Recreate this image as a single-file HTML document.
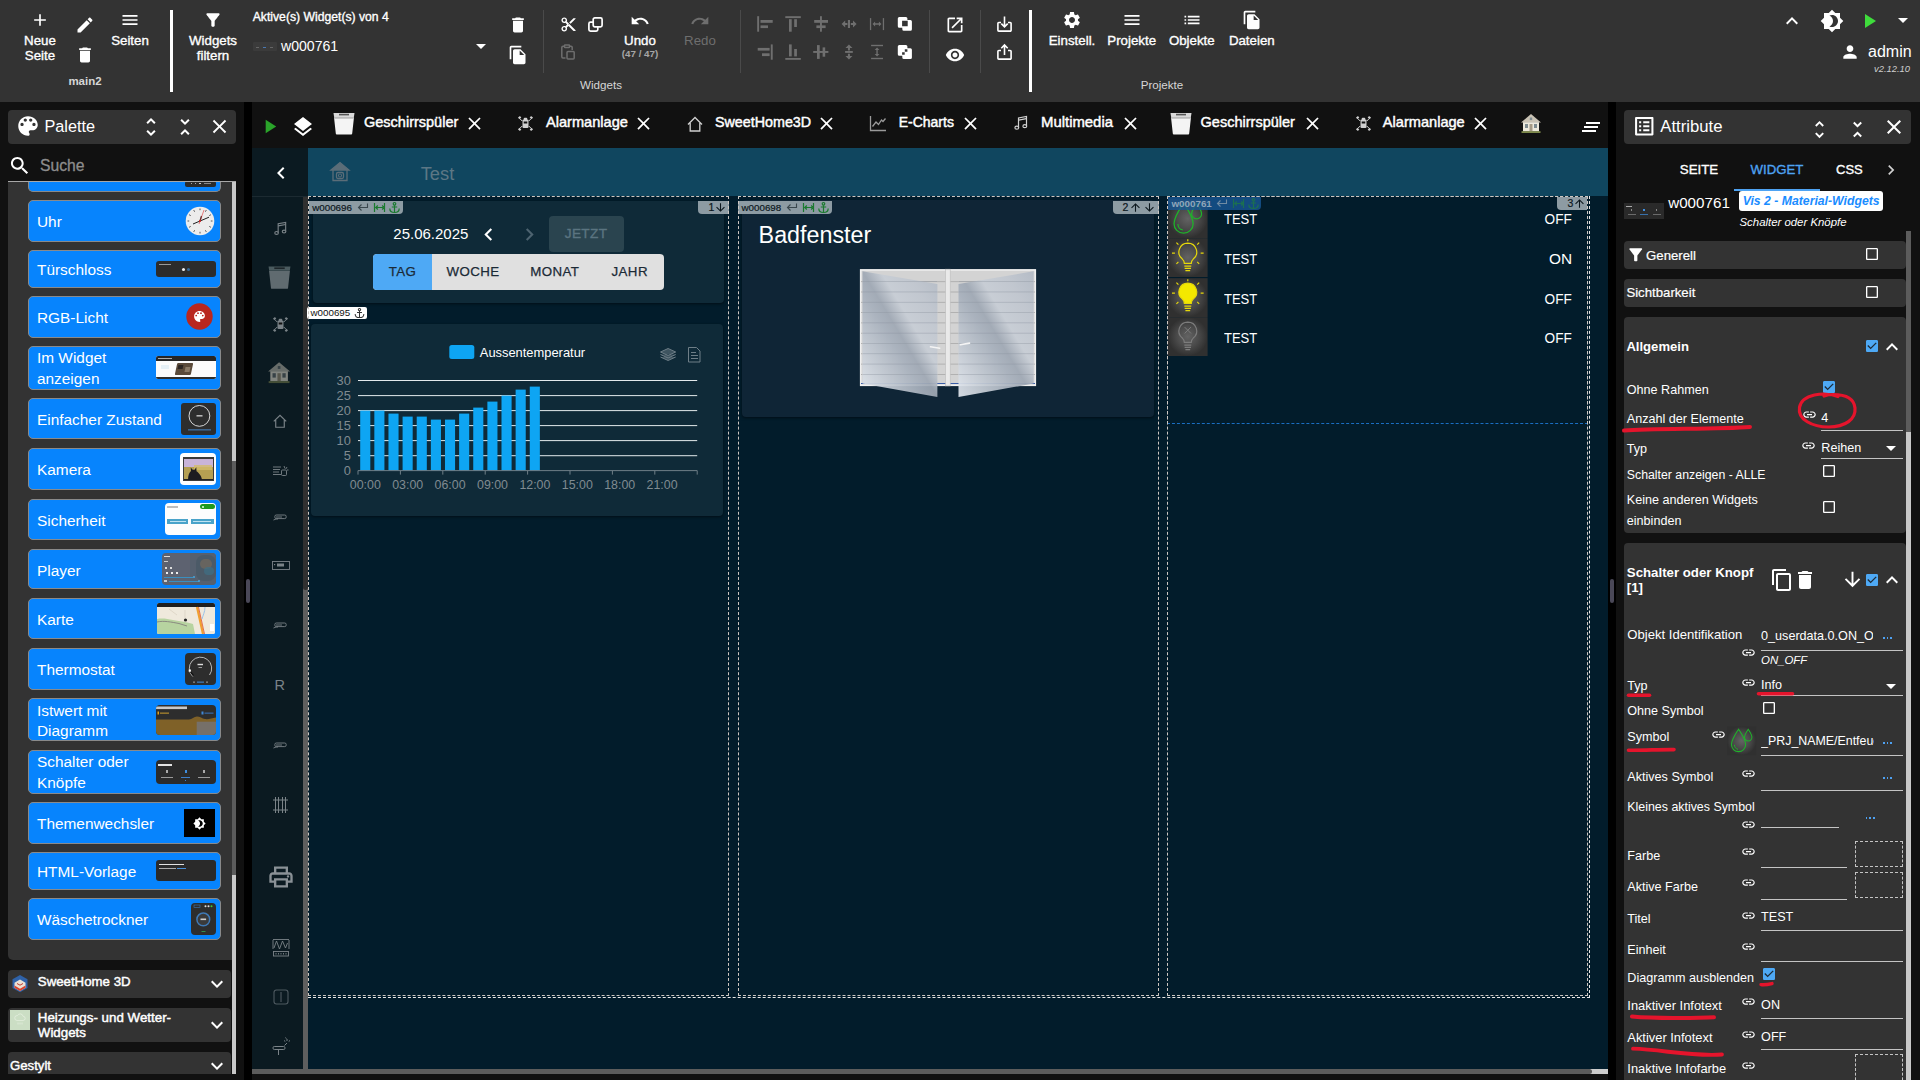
<!DOCTYPE html>
<html lang="de">
<head>
<meta charset="utf-8">
<title>ioBroker vis-2 Editor</title>
<style>
*{box-sizing:border-box;margin:0;padding:0}
html,body{width:1920px;height:1080px;overflow:hidden;background:#111111;color:#fff;font-family:"Liberation Sans",sans-serif;}
.a{position:absolute}
.t{position:absolute;white-space:nowrap;line-height:1}
.m{-webkit-text-stroke:.35px currentColor}
svg{position:absolute;display:block;overflow:visible}
.ic{fill:#fff}
.dis{fill:#6e6e6e}
/* top toolbar */
#top{left:0;top:0;width:1920px;height:102px;background:#333333}
.vsep{position:absolute;width:1px;background:#4a4a4a}
.vbig{position:absolute;width:3px;background:#fff}
/* panels */
.hdr{position:absolute;background:#333333;border-radius:4px}
.pi{position:absolute;left:28px;width:193px;background:#0784fd;border:1px solid #8a8a8a;border-radius:5px;color:#fff;font-size:15.4px}
.pi .t{left:8px}
.th{position:absolute;border-radius:3px;overflow:hidden}
.acc{position:absolute;left:8px;width:223px;background:#333333;border-radius:4px}
/* attribute panel */
.sec{position:absolute;left:1624px;width:282px;background:#333333;border-radius:4px}
.lbl{position:absolute;left:1627px;font-size:12.6px;white-space:nowrap;line-height:1;color:#fff}
.val{position:absolute;font-size:12.6px;white-space:nowrap;line-height:1;color:#fff}
.ul{position:absolute;height:1px;background:#c9c9c9}
.dash{position:absolute;border:1px dashed #bdbdbd}
.red{position:absolute;background:#e5142c;border-radius:3px}
</style>
</head>
<body>
<svg width="0" height="0" style="left:-10px;top:-10px">
<defs>
<path id="i-add" d="M19 13h-6v6h-2v-6H5v-2h6V5h2v6h6v2z"/>
<path id="i-edit" d="M3 17.25V21h3.75L17.81 9.94l-3.75-3.75L3 17.25zM20.71 7.04c.39-.39.39-1.02 0-1.41l-2.34-2.34c-.39-.39-1.02-.39-1.41 0l-1.83 1.83 3.75 3.75 1.83-1.83z"/>
<path id="i-del" d="M6 19c0 1.1.9 2 2 2h8c1.1 0 2-.9 2-2V7H6v12zM19 4h-3.5l-1-1h-5l-1 1H5v2h14V4z"/>
<path id="i-menu" d="M3 18h18v-2H3v2zm0-5h18v-2H3v2zm0-7v2h18V6H3z"/>
<path id="i-filter" d="M4.25 5.61C6.27 8.2 10 13 10 13v6c0 .55.45 1 1 1h2c.55 0 1-.45 1-1v-6s3.72-4.8 5.74-7.39c.51-.66.04-1.61-.79-1.61H5.04c-.83 0-1.3.95-.79 1.61z"/>
<path id="i-dd" d="M7 10l5 5 5-5z"/>
<path id="i-fcopy" d="M16 1H4c-1.1 0-2 .9-2 2v14h2V3h12V1zm-1 4l6 6v10c0 1.1-.9 2-2 2H7.990C6.890 23 6 22.100 6 21l.010-14c0-1.100.890-2 1.990-2h7zm-1 7h5.500L14 6.500V12z"/>
<path id="i-ccopy" d="M16 1H4c-1.1 0-2 .9-2 2v14h2V3h12V1zm3 4H8c-1.1 0-2 .9-2 2v14c0 1.1.9 2 2 2h11c1.1 0 2-.9 2-2V7c0-1.1-.9-2-2-2zm0 16H8V7h11v14z"/>
<path id="i-cut" d="M9.64 7.64c.23-.5.36-1.05.36-1.64 0-2.21-1.79-4-4-4S2 3.790 2 6s1.790 4 4 4c.590 0 1.140-.130 1.640-.360L10 12l-2.360 2.360C7.140 14.130 6.590 14 6 14c-2.210 0-4 1.790-4 4s1.790 4 4 4 4-1.790 4-4c0-.590-.130-1.140-.360-1.640L12 14l7 7h3v-1L9.640 7.640zM6 8c-1.100 0-2-.890-2-2s.900-2 2-2 2 .890 2 2-.900 2-2 2zm0 12c-1.100 0-2-.890-2-2s.900-2 2-2 2 .890 2 2-.900 2-2 2zm6-7.500c-.280 0-.500-.220-.500-.500s.220-.500.500-.500.500.220.500.500-.220.500-.500.500zM19 3l-6 6 2 2 7-7V3z"/>
<path id="i-undo" d="M12.5 8c-2.65 0-5.05.99-6.9 2.6L2 7v9h9l-3.62-3.62c1.39-1.16 3.16-1.88 5.12-1.88 3.54 0 6.55 2.31 7.6 5.5l2.37-.78C21.08 11.03 17.15 8 12.5 8z"/>
<path id="i-redo" d="M18.4 10.6C16.55 8.99 14.15 8 11.5 8c-4.65 0-8.58 3.03-9.96 7.22L3.9 16c1.05-3.19 4.05-5.5 7.6-5.5 1.95 0 3.73.72 5.12 1.88L13 16h9V7l-3.6 3.6z"/>
<path id="i-open" d="M19 19H5V5h7V3H5c-1.11 0-2 .9-2 2v14c0 1.1.89 2 2 2h14c1.1 0 2-.9 2-2v-7h-2v7zM14 3v2h3.59l-9.83 9.83 1.41 1.41L19 6.41V10h2V3h-7z"/>
<path id="i-eye" d="M12 4.5C7 4.5 2.73 7.61 1 12c1.73 4.39 6 7.5 11 7.5s9.27-3.11 11-7.5c-1.73-4.39-6-7.5-11-7.5zM12 17c-2.76 0-5-2.24-5-5s2.24-5 5-5 5 2.24 5 5-2.24 5-5 5zm0-8c-1.66 0-3 1.34-3 3s1.34 3 3 3 3-1.34 3-3-1.34-3-3-3z"/>
<path id="i-gear" d="M19.14 12.94c.04-.3.06-.61.06-.94 0-.32-.02-.64-.07-.94l2.03-1.58c.18-.14.23-.41.12-.61l-1.92-3.32c-.12-.22-.37-.29-.59-.22l-2.39.96c-.5-.38-1.03-.7-1.62-.94l-.36-2.54c-.04-.24-.24-.41-.48-.41h-3.84c-.24 0-.43.17-.47.41l-.36 2.54c-.59.24-1.13.57-1.62.94l-2.39-.96c-.22-.08-.47 0-.59.22L2.74 8.87c-.12.21-.08.47.12.61l2.03 1.58c-.05.3-.09.63-.09.94s.02.64.07.94l-2.03 1.58c-.18.14-.23.41-.12.61l1.92 3.32c.12.22.37.29.59.22l2.39-.96c.5.38 1.03.7 1.62.94l.36 2.54c.05.24.24.41.48.41h3.84c.24 0 .44-.17.47-.41l.36-2.54c.59-.24 1.13-.56 1.62-.94l2.39.96c.22.08.47 0 .59-.22l1.92-3.32c.12-.22.07-.47-.12-.61l-2.01-1.58zM12 15.6c-1.98 0-3.6-1.62-3.6-3.6s1.62-3.6 3.6-3.6 3.6 1.62 3.6 3.6-1.62 3.6-3.6 3.6z"/>
<path id="i-list" d="M3 13h2v-2H3v2zm0 4h2v-2H3v2zm0-8h2V7H3v2zm4 4h14v-2H7v2zm0 4h14v-2H7v2zM7 7v2h14V7H7z"/>
<path id="i-person" d="M12 12c2.21 0 4-1.79 4-4s-1.79-4-4-4-4 1.79-4 4 1.79 4 4 4zm0 2c-2.67 0-8 1.34-8 4v2h16v-2c0-2.66-5.33-4-8-4z"/>
<path id="i-play" d="M8 5v14l11-7z"/>
<path id="i-less" d="M12 8l-6 6 1.41 1.41L12 10.83l4.59 4.58L18 14z"/>
<path id="i-more" d="M16.59 8.59L12 13.17 7.41 8.59 6 10l6 6 6-6z"/>
<path id="i-close" d="M19 6.41L17.59 5 12 10.59 6.41 5 5 6.41 10.59 12 5 17.59 6.41 19 12 13.41 17.59 19 19 17.59 13.41 12z"/>
<path id="i-bright" d="M20 8.69V4h-4.69L12 .69 8.69 4H4v4.69L.69 12 4 15.31V20h4.69L12 23.31 15.31 20H20v-4.69L23.31 12 20 8.69zM12 18c-.89 0-1.74-.2-2.5-.55C11.56 16.5 13 14.42 13 12s-1.44-4.5-3.5-5.45C10.26 6.2 11.11 6 12 6c3.31 0 6 2.69 6 6s-2.69 6-6 6z"/>
<path id="i-palette" d="M12 3c-4.97 0-9 4.03-9 9s4.03 9 9 9c.83 0 1.5-.67 1.5-1.5 0-.39-.15-.74-.39-1.01-.23-.26-.38-.61-.38-.99 0-.83.67-1.5 1.5-1.5H16c2.76 0 5-2.24 5-5 0-4.42-4.03-8-9-8zm-5.5 9c-.83 0-1.5-.67-1.5-1.5S5.67 9 6.5 9 8 9.67 8 10.5 7.33 12 6.5 12zm3-4C8.67 8 8 7.33 8 6.5S8.67 5 9.5 5s1.500.67 1.500 1.500S10.330 8 9.500 8zm5 0c-.83 0-1.500-.67-1.500-1.500S13.670 5 14.500 5s1.500.67 1.500 1.500S15.330 8 14.500 8zm3 4c-.83 0-1.500-.67-1.500-1.500S16.670 9 17.500 9s1.500.67 1.500 1.500-.67 1.500-1.500 1.500z"/>
<path id="i-unmore" d="M12 5.83L15.17 9l1.41-1.41L12 3 7.41 7.59 8.83 9 12 5.83zm0 12.34L8.83 15l-1.41 1.41L12 21l4.59-4.59L15.17 15 12 18.17z"/>
<path id="i-unless" d="M7.41 18.59L8.83 20 12 16.83 15.17 20l1.41-1.41L12 14l-4.59 4.59zm9.18-13.18L15.17 4 12 7.17 8.83 4 7.41 5.41 12 10l4.590-4.590z"/>
<path id="i-search" d="M15.5 14h-.79l-.28-.27C15.41 12.59 16 11.11 16 9.5 16 5.91 13.09 3 9.5 3S3 5.91 3 9.5 5.91 16 9.5 16c1.61 0 3.09-.59 4.23-1.57l.27.28v.79l5 4.99L20.49 19l-4.99-5zm-6 0C7.01 14 5 11.99 5 9.5S7.01 5 9.5 5 14 7.01 14 9.5 11.99 14 9.5 14z"/>
<path id="i-layers" d="M11.99 18.54l-7.37-5.73L3 14.07l9 7 9-7-1.63-1.27-7.38 5.74zM12 16l7.36-5.73L21 9l-9-7-9 7 1.63 1.27L12 16z"/>
<path id="i-listalt" d="M19 5v14H5V5h14m1.1-2H3.9c-.5 0-.9.4-.9.9v16.2c0 .4.4.9.9.9h16.2c.4 0 .9-.5.9-.9V3.9c0-.5-.5-.9-.9-.9zM11 7h6v2h-6V7zm0 4h6v2h-6v-2zm0 4h6v2h-6zM7 7h2v2H7zm0 4h2v2H7zm0 4h2v2H7z"/>
<path id="i-link" d="M3.9 12c0-1.71 1.39-3.1 3.1-3.1h4V7H7c-2.76 0-5 2.24-5 5s2.24 5 5 5h4v-1.900H7c-1.710 0-3.100-1.390-3.100-3.100zM8 13h8v-2H8v2zm9-6h-4v1.900h4c1.710 0 3.100 1.390 3.100 3.100s-1.390 3.100-3.100 3.100h-4V17h4c2.760 0 5-2.240 5-5s-2.240-5-5-5z"/>
<path id="i-cl" d="M15.41 7.41L14 6l-6 6 6 6 1.41-1.41L10.83 12z"/>
<path id="i-cr" d="M10 6L8.59 7.41 13.17 12l-4.58 4.59L10 18l6-6z"/>
<path id="i-down" d="M20 12l-1.41-1.41L13 16.17V4h-2v12.17l-5.58-5.59L4 12l8 8 8-8z"/>
<path id="i-up" d="M4 12l1.41 1.41L11 7.83V20h2V7.83l5.580 5.590L20 12l-8-8-8 8z"/>
<path id="i-cbo" d="M19 5v14H5V5h14m0-2H5c-1.1 0-2 .9-2 2v14c0 1.1.9 2 2 2h14c1.1 0 2-.9 2-2V5c0-1.1-.9-2-2-2z"/>
<path id="i-cb" d="M19 3H5c-1.11 0-2 .9-2 2v14c0 1.1.89 2 2 2h14c1.11 0 2-.9 2-2V5c0-1.1-.89-2-2-2zm-9 14l-5-5 1.41-1.41L10 14.170l7.590-7.590L19 8l-9 9z"/>
<path id="i-print" d="M19 8H5c-1.66 0-3 1.34-3 3v6h4v4h12v-4h4v-6c0-1.66-1.34-3-3-3zm-3 11H8v-5h8v5zm3-7c-.55 0-1-.45-1-1s.45-1 1-1 1 .45 1 1-.45 1-1 1zm-1-9H6v4h12V3z"/>
<path id="i-clearall" d="M5 13h14v-2H5v2zm-2 4h14v-2H3v2zM7 7v2h14V7H7z"/>
</defs>
</svg>

<!-- ================= TOP TOOLBAR ================= -->
<div id="top" class="a">
<!-- group: pages -->
<svg class="ic" style="left:30px;top:10px" width="20" height="20" viewBox="0 0 24 24"><use href="#i-add"/></svg>
<div class="t m" style="left:40px;top:34.4px;font-size:13.3px;transform:translateX(-50%)">Neue</div>
<div class="t m" style="left:40px;top:49.4px;font-size:13.3px;transform:translateX(-50%)">Seite</div>
<svg class="ic" style="left:74.7px;top:15px" width="20" height="20" viewBox="0 0 24 24"><use href="#i-edit"/></svg>
<svg class="ic" style="left:74.7px;top:45px" width="20" height="20" viewBox="0 0 24 24"><use href="#i-del"/></svg>
<svg class="ic" style="left:120px;top:10px" width="20" height="20" viewBox="0 0 24 24"><use href="#i-menu"/></svg>
<div class="t m" style="left:130px;top:34.4px;font-size:13.3px;transform:translateX(-50%)">Seiten</div>
<div class="t" style="left:85px;top:76.3px;font-size:11.5px;font-weight:700;color:#d6d6d6;transform:translateX(-50%)">main2</div>
<div class="vbig" style="left:170px;top:10px;height:82px"></div>
<!-- group: widgets -->
<svg class="ic" style="left:202.7px;top:10px" width="20" height="20" viewBox="0 0 24 24"><use href="#i-filter"/></svg>
<div class="t m" style="left:213px;top:34.4px;font-size:13.3px;transform:translateX(-50%)">Widgets</div>
<div class="t m" style="left:213px;top:49.4px;font-size:13.3px;transform:translateX(-50%)">filtern</div>
<div class="t m" style="left:252.7px;top:11.3px;font-size:12.2px">Aktive(s) Widget(s) von 4</div>
<div class="a" style="left:252.7px;top:41.5px;width:24px;height:9.5px;background:#3b3b3b;border-radius:1px"></div>
<div class="a" style="left:256px;top:47px;width:3px;height:1px;background:#666"></div>
<div class="a" style="left:263px;top:47px;width:3px;height:1px;background:#4a78b0"></div>
<div class="a" style="left:270px;top:47px;width:3px;height:1px;background:#666"></div>
<div class="t" style="left:281px;top:39.4px;font-size:14.1px">w000761</div>
<svg class="ic" style="left:468.7px;top:34px" width="24" height="24" viewBox="0 0 24 24"><use href="#i-dd"/></svg>
<svg class="ic" style="left:508.300px;top:15px" width="20" height="20" viewBox="0 0 24 24"><use href="#i-del"/></svg>
<svg class="ic" style="left:507.8px;top:45px" width="20" height="20" viewBox="0 0 24 24"><use href="#i-fcopy"/></svg>
<div class="vsep" style="left:542.800px;top:10px;height:63px"></div>
<!-- cut / copy / paste -->
<svg class="ic" style="left:559.5px;top:15.5px" width="17" height="17" viewBox="0 0 24 24"><use href="#i-cut"/></svg>
<svg style="left:588px;top:16.5px;fill:none;stroke:#fff;stroke-width:1.7" width="15" height="15" viewBox="0 0 15 15"><rect x="5.2" y="0.9" width="8.9" height="8.9" rx="1.6"/><path d="M5.2 5.2H2.5a1.6 1.6 0 0 0-1.6 1.6v5.700a1.600 1.600 0 0 0 1.600 1.600h5.700a1.600 1.600 0 0 0 1.600-1.600V9.800"/></svg>
<svg style="left:559px;top:44.200px;fill:none;stroke:#6e6e6e;stroke-width:1.500" width="16" height="16" viewBox="0 0 16 16"><path d="M10.500 2.200H12a1.200 1.200 0 0 1 1.200 1.200V6M5.500 2.200H4a1.200 1.200 0 0 0-1.200 1.200v9.400A1.200 1.200 0 0 0 4 14h2.500"/><rect x="5.500" y="0.900" width="5" height="2.600" rx=".6"/><rect x="8" y="7.500" width="7.200" height="7.600" rx="1"/></svg>
<!-- undo / redo -->
<svg class="ic" style="left:630px;top:10.5px" width="20" height="20" viewBox="0 0 24 24"><use href="#i-undo"/></svg>
<div class="t m" style="left:640px;top:34.4px;font-size:13.3px;transform:translateX(-50%)">Undo</div>
<div class="t" style="left:640px;top:49.200px;font-size:9.800px;font-weight:700;color:#a6a6a6;transform:translateX(-50%)">(47 / 47)</div>
<svg class="dis" style="left:690px;top:10.5px" width="20" height="20" viewBox="0 0 24 24"><use href="#i-redo"/></svg>
<div class="t" style="left:700px;top:34.4px;font-size:13.3px;color:#6e6e6e;transform:translateX(-50%)">Redo</div>
<div class="vsep" style="left:740px;top:10px;height:63px"></div>
<svg style="left:745px;top:5px" width="180" height="65" viewBox="745 5 180 65">
<g fill="#6f6f6f">
<!-- r1: align left -->
<rect x="757.2" y="16.2" width="1.9" height="15.5"/><rect x="760.5" y="20" width="12.2" height="2.8"/><rect x="760.5" y="25.4" width="7.5" height="2.700"/>
<!-- r1: align top -->
<rect x="785.3" y="16.2" width="15.5" height="1.9"/><rect x="789" y="19.2" width="2.700" height="12.500"/><rect x="794.2" y="19.200" width="2.700" height="7.800"/>
<!-- r1: center h -->
<rect x="820" y="16.200" width="1.900" height="15.500"/><rect x="814.200" y="20" width="13.800" height="2.800"/><rect x="816.400" y="25.400" width="9.200" height="2.700"/>
<!-- r1: dist h -->
<rect x="847.900" y="20" width="2.100" height="8"/><path d="M841.600 24l3.600-3.600v2.500h2.200v2.200h-2.200v2.500zM856.600 24l-3.600-3.600v2.500h-2.200v2.200h2.200v2.500z"/>
<!-- r1: width -->
<rect x="869.900" y="18.100" width="1.300" height="12"/><rect x="882.800" y="18.100" width="1.300" height="12"/><path d="M872.500 24l2.600-2.400v1.700h3.800v-1.700l2.600 2.400-2.600 2.400v-1.700h-3.800v1.700z"/>
<!-- r2: align right -->
<rect x="770.800" y="44.400" width="1.900" height="15.300"/><rect x="757.700" y="47.900" width="11.900" height="2.700"/><rect x="762" y="53.300" width="7.600" height="2.800"/>
<!-- r2: align bottom -->
<rect x="785.300" y="58" width="15.500" height="1.800"/><rect x="789" y="44.400" width="2.700" height="12"/><rect x="794.200" y="49" width="2.700" height="7.400"/>
<!-- r2: center v -->
<rect x="813.200" y="51" width="15.200" height="1.900"/><rect x="817" y="45.100" width="2.700" height="13.800"/><rect x="822.600" y="47.400" width="2.600" height="9.300"/>
<!-- r2: dist v -->
<rect x="845.100" y="51" width="7.700" height="1.900"/><path d="M848.950 44.600l3.500 3.500h-2.500v2.300h-2v-2.300h-2.500zM848.950 59.500l3.500-3.500h-2.500v-2.300h-2v2.300h-2.500z"/>
<!-- r2: height -->
<rect x="871.100" y="44.800" width="11.900" height="1.400"/><rect x="871.100" y="57.800" width="11.900" height="1.400"/><path d="M877.050 47.400l2.400 2.600h-1.700v4h1.700l-2.400 2.600-2.400-2.600h1.700v-4h-1.700z"/>
</g>
<!-- bring to front / send to back -->
<g fill="#fff">
<path fill-rule="evenodd" d="M899.300 17h6.600a1.500 1.500 0 0 1 1.500 1.500v1.500h3a1.500 1.500 0 0 1 1.500 1.500v7.800a1.500 1.500 0 0 1-1.500 1.500h-6.600a1.500 1.500 0 0 1-1.500-1.500v-1.600h-3a1.500 1.500 0 0 1-1.500-1.500v-7.700a1.500 1.500 0 0 1 1.500-1.500zM902.100 20.700h5.600v5.600h-5.600z"/>
<path fill-rule="evenodd" d="M899.300 45h6.600a1.500 1.500 0 0 1 1.500 1.500v1.700h3a1.500 1.500 0 0 1 1.500 1.500v7.800a1.500 1.500 0 0 1-1.500 1.500h-6.600a1.500 1.500 0 0 1-1.500-1.500v-1.800h-3a1.500 1.500 0 0 1-1.500-1.500v-7.700a1.500 1.500 0 0 1 1.500-1.500zM904.800 49.200h2.600v2.600h-2.600zM902.100 52.200h2.600v2.600h-2.600z"/>
</g>
</svg>

<div class="vsep" style="left:929px;top:10px;height:63px"></div>
<svg class="ic" style="left:945px;top:15px" width="20" height="20" viewBox="0 0 24 24"><use href="#i-open"/></svg>
<svg class="ic" style="left:945px;top:45px" width="20" height="20" viewBox="0 0 24 24"><use href="#i-eye"/></svg>
<div class="vsep" style="left:980px;top:10px;height:63px"></div>
<!-- import / export -->
<svg style="left:997px;top:15.500px;fill:none;stroke:#fff;stroke-width:1.600" width="15" height="16" viewBox="0 0 15 16"><path d="M4 6.500H1.800a.9.9 0 0 0-.9.9v6.800a.9.9 0 0 0 .9.9h11.400a.9.9 0 0 0 .9-.9V7.400a.9.9 0 0 0-.9-.9H11M7.500 .500v10M4.300 7.600l3.200 3.200 3.200-3.200"/></svg>
<svg style="left:997px;top:43.500px;fill:none;stroke:#fff;stroke-width:1.600" width="15" height="16" viewBox="0 0 15 16"><path d="M4 6.500H1.800a.9.9 0 0 0-.9.9v6.800a.9.9 0 0 0 .9.9h11.400a.9.9 0 0 0 .9-.9V7.400a.9.9 0 0 0-.9-.9H11M7.500 11V1M4.300 4.200l3.200-3.200 3.200 3.200"/></svg>
<div class="vbig" style="left:1029px;top:10px;height:82px"></div>
<div class="t" style="left:601px;top:78.500px;font-size:11.600px;color:#d6d6d6;transform:translateX(-50%)">Widgets</div>
<!-- group: projects -->
<svg class="ic" style="left:1061.700px;top:10px" width="20" height="20" viewBox="0 0 24 24"><use href="#i-gear"/></svg>
<div class="t m" style="left:1072px;top:34.400px;font-size:13.300px;transform:translateX(-50%)">Einstell.</div>
<svg class="ic" style="left:1121.700px;top:10px" width="20" height="20" viewBox="0 0 24 24"><use href="#i-menu"/></svg>
<div class="t m" style="left:1131.700px;top:34.400px;font-size:13.300px;transform:translateX(-50%)">Projekte</div>
<svg class="ic" style="left:1181.700px;top:10px" width="20" height="20" viewBox="0 0 24 24"><use href="#i-list"/></svg>
<div class="t m" style="left:1191.800px;top:34.400px;font-size:13.300px;transform:translateX(-50%)">Objekte</div>
<svg class="ic" style="left:1241.700px;top:9.500px" width="20" height="20" viewBox="0 0 24 24"><use href="#i-fcopy"/></svg>
<div class="t m" style="left:1251.800px;top:34.400px;font-size:13.300px;transform:translateX(-50%)">Dateien</div>
<div class="t" style="left:1162px;top:78.500px;font-size:11.600px;color:#d6d6d6;transform:translateX(-50%)">Projekte</div>
<!-- right cluster -->
<svg class="ic" style="left:1780.300px;top:8.700px" width="24" height="24" viewBox="0 0 24 24"><use href="#i-less"/></svg>
<svg class="ic" style="left:1819.700px;top:8.700px" width="24" height="24" viewBox="0 0 24 24"><use href="#i-bright"/></svg>
<svg style="left:1856.500px;top:8.700px;fill:#3fdc3c" width="24" height="24" viewBox="0 0 24 24"><use href="#i-play"/></svg>
<svg class="ic" style="left:1891px;top:8.200px" width="24" height="24" viewBox="0 0 24 24"><use href="#i-dd"/></svg>
<svg class="ic" style="left:1839.700px;top:41.700px" width="20" height="20" viewBox="0 0 24 24"><use href="#i-person"/></svg>
<div class="t" style="left:1868px;top:44.400px;font-size:16px">admin</div>
<div class="t" style="left:1874px;top:63.800px;font-size:9.400px;font-style:italic;color:#cfcfcf">v2.12.10</div>
</div>
<!--TOP-END-->

<!-- ================= LEFT PALETTE ================= -->
<!-- header -->
<div class="hdr" style="left:8px;top:110px;width:228px;height:34px"></div>
<svg class="ic" style="left:15px;top:112.800px" width="26" height="26" viewBox="0 0 24 24"><use href="#i-palette"/></svg>
<div class="t" style="left:44.4px;top:118.2px;font-size:16.3px">Palette</div>
<svg class="ic" style="left:139px;top:114.600px" width="24" height="24" viewBox="0 0 24 24"><use href="#i-unmore"/></svg>
<svg class="ic" style="left:173px;top:114.600px" width="24" height="24" viewBox="0 0 24 24"><use href="#i-unless"/></svg>
<svg class="ic" style="left:207.600px;top:115.100px" width="23" height="23" viewBox="0 0 24 24"><use href="#i-close"/></svg>
<svg class="ic" style="left:7.500px;top:154.100px" width="23.500" height="23.500" viewBox="0 0 24 24"><use href="#i-search"/></svg>
<div class="t" style="left:40px;top:157.700px;font-size:15.700px;color:#8d8d8d;-webkit-text-stroke:.3px #8d8d8d">Suche</div>
<div class="a" style="left:8px;top:180.500px;width:223.500px;height:779.500px;background:#333333;border-radius:0 0 0 5px"></div>
<div class="a" style="left:231.500px;top:180.500px;width:4.500px;height:893px;background:#c8c8c8"></div>
<div class="a" style="left:231.500px;top:461px;width:4.500px;height:414px;background:#5c5c5c"></div>
<div class="pi" style="top:180.500px;height:11.300px;border-top:none;border-radius:0 0 5px 5px"></div><div class="th" style="left:185.2px;top:181.0px;width:30.6px;height:5.5px;background:#2b2b2b;border-radius:2px"><div class="a" style="left:6px;top:2px;width:1px;height:1px;background:#aaa;"></div><div class="a" style="left:10px;top:2px;width:1px;height:1px;background:#aaa;"></div><div class="a" style="left:14px;top:2px;width:2px;height:1px;background:#ccc;"></div><div class="a" style="left:19px;top:2px;width:7px;height:1px;background:#888;"></div></div>
<div class="a" style="left:8px;top:180.500px;width:228px;height:1px;background:#a8a8a8"></div>
<div class="pi" style="top:200.0px;height:41.5px"><div class="t" style="top:13.0px">Uhr</div></div><svg style="left:185px;top:205.500px" width="30" height="30" viewBox="-15 -15 30 30"><circle r="14.300" fill="#ececec"/><g stroke="#333" stroke-width=".8"><line x1="0" y1="-12.500" x2="0" y2="-10.800" transform="rotate(0)"/><line x1="0" y1="-12.500" x2="0" y2="-10.800" transform="rotate(30)"/><line x1="0" y1="-12.500" x2="0" y2="-10.800" transform="rotate(60)"/><line x1="0" y1="-12.500" x2="0" y2="-10.800" transform="rotate(90)"/><line x1="0" y1="-12.500" x2="0" y2="-10.800" transform="rotate(120)"/><line x1="0" y1="-12.500" x2="0" y2="-10.800" transform="rotate(150)"/><line x1="0" y1="-12.500" x2="0" y2="-10.800" transform="rotate(180)"/><line x1="0" y1="-12.500" x2="0" y2="-10.800" transform="rotate(210)"/><line x1="0" y1="-12.500" x2="0" y2="-10.800" transform="rotate(240)"/><line x1="0" y1="-12.500" x2="0" y2="-10.800" transform="rotate(270)"/><line x1="0" y1="-12.500" x2="0" y2="-10.800" transform="rotate(300)"/><line x1="0" y1="-12.500" x2="0" y2="-10.800" transform="rotate(330)"/></g><line x1="-7" y1="3" x2="9" y2="-3.800" stroke="#222" stroke-width="1"/><line x1="0" y1="0" x2="1.500" y2="-5" stroke="#222" stroke-width="1.200"/><line x1="-1" y1="3" x2="4" y2="-11" stroke="#e03030" stroke-width=".6"/><circle r="1" fill="#c22"/></svg>

<div class="pi" style="top:250.3px;height:37.3px"><div class="t" style="top:10.7px">Türschloss</div></div><div class="th" style="left:155.9px;top:260.5px;width:60.3px;height:16.7px;background:#2c2c2c;border-radius:3px"><div class="a" style="left:3px;top:3px;width:12px;height:1px;background:#999;"></div><div class="a" style="left:26.5px;top:7.5px;width:2.5px;height:2.5px;background:#eee;border-radius:2px"></div><div class="a" style="left:31.5px;top:7.5px;width:2.5px;height:2.5px;background:#356a9a;border-radius:2px"></div></div>

<div class="pi" style="top:296.0px;height:41.7px"><div class="t" style="top:13.0px">RGB-Licht</div></div><svg style="left:186.200px;top:303px" width="27" height="27" viewBox="0 0 27 27"><circle cx="13.500" cy="13.500" r="13.200" fill="#b9271f"/><g transform="translate(6.300 6.300) scale(.6)" fill="#fff"><use href="#i-palette"/></g></svg>

<div class="pi" style="top:345.9px;height:43.8px"><div class="t" style="top:3.1px">Im Widget</div><div class="t" style="top:24.1px">anzeigen</div></div><div class="th" style="left:155.9px;top:355.8px;width:59.9px;height:23.4px;background:#fbfbfb;border-radius:2px"><div class="a" style="left:0px;top:0px;width:60px;height:5.5px;background:#262626;"></div><div class="a" style="left:2px;top:2px;width:14px;height:1px;background:#aaa;"></div><div class="a" style="left:0px;top:5.5px;width:60px;height:16px;background:#fbfbfb;"></div><div class="a" style="left:5px;top:9px;width:8px;height:4px;background:#e6f0f6;"></div><div class="a" style="left:20px;top:7px;width:16px;height:12px;background:#5a4a3a;transform:skewX(-12deg);border-radius:1px"></div><div class="a" style="left:22px;top:9px;width:5px;height:4px;background:#2a2420;transform:skewX(-12deg)"></div><div class="a" style="left:29px;top:11px;width:5px;height:5px;background:#8a7a66;transform:skewX(-12deg)"></div><div class="a" style="left:0px;top:21.5px;width:60px;height:2px;background:#2d2d2d;"></div></div>

<div class="pi" style="top:398.3px;height:41.2px"><div class="t" style="top:12.7px">Einfacher Zustand</div></div><div class="th" style="left:181.1px;top:403.1px;width:34.9px;height:31.6px;background:#2d2d2d;border-radius:3px"><svg style="left:0;top:0" width="35" height="32" viewBox="0 0 35 32"><circle cx="18.400" cy="12.900" r="10.400" fill="none" stroke="#e8e8e8" stroke-width=".9"/><rect x="15.500" y="12" width="6" height="1.600" fill="#b5b5b5"/><rect x="7" y="26" width="23" height="1.600" fill="#3f6fa0" opacity=".85"/></svg></div>

<div class="pi" style="top:448.4px;height:41.3px"><div class="t" style="top:12.6px">Kamera</div></div><div class="th" style="left:180.1px;top:453.0px;width:35.9px;height:32.0px;background:#fdfdfd;border-radius:4px"><div class="a" style="left:2.7px;top:4px;width:31px;height:23.5px;background:#3a3a3a;"></div><div class="a" style="left:4px;top:5.5px;width:28.5px;height:20px;background:#c9b4d8;"></div><div class="a" style="left:4px;top:14px;width:28.5px;height:11.5px;background:#b59f52;"></div><div class="a" style="left:14px;top:12px;width:18px;height:5px;background:#d3bc6a;opacity:.8"></div><div class="a" style="left:4px;top:25.5px;width:28.5px;height:1.5px;background:#222;"></div><svg style="left:7px;top:13px" width="16" height="14" viewBox="0 0 16 14"><path d="M1 14c0-5 1.500-8 3-9l-.3-3.500 2 2.200h1.800l1.800-2.400.2 4c2 1.500 5 4 5.500 8.700z" fill="#1c1b20"/></svg></div>

<div class="pi" style="top:498.5px;height:41.2px"><div class="t" style="top:13.5px">Sicherheit</div></div><div class="th" style="left:164.8px;top:503.0px;width:51.2px;height:32.0px;background:#fdfdfd;border-radius:4px"><div class="a" style="left:2.5px;top:3.2px;width:11px;height:1.6px;background:#bdbdbd;"></div><div class="a" style="left:35px;top:1.4px;width:15.5px;height:4.2px;background:#1f9a1f;border-radius:2.500px"></div><div class="a" style="left:37px;top:2.5px;width:2px;height:2px;background:#eaffea;border-radius:1px"></div><div class="a" style="left:2.7px;top:16.2px;width:21px;height:5px;background:#4aa3c9;"></div><div class="a" style="left:26px;top:16.2px;width:23.5px;height:5px;background:#4aa3c9;"></div><div class="a" style="left:5px;top:18.3px;width:16px;height:1px;background:#bfe3f2;"></div><div class="a" style="left:28.5px;top:18.3px;width:18px;height:1px;background:#bfe3f2;"></div></div>

<div class="pi" style="top:548.7px;height:40.8px"><div class="t" style="top:13.3px">Player</div></div><div class="th" style="left:162.0px;top:553.2px;width:54.0px;height:31.6px;background:#5d6270;border-radius:4px"><div class="a" style="left:28px;top:0px;width:26px;height:31.6px;background:#56606e;"></div><div class="a" style="left:34px;top:2px;width:20px;height:26px;background:#4a5a66;border-radius:8px;opacity:.9"></div><div class="a" style="left:38px;top:6px;width:12px;height:10px;background:#7a6a5a;border-radius:5px;opacity:.6"></div><div class="a" style="left:42px;top:14px;width:10px;height:8px;background:#3f6f86;border-radius:4px;opacity:.7"></div><div class="a" style="left:2px;top:2.5px;width:6px;height:1.3px;background:#ddd;"></div><div class="a" style="left:2px;top:8px;width:4px;height:1.2px;background:#ccc;"></div><div class="a" style="left:3px;top:13.5px;width:2px;height:2px;background:#ddd;"></div><div class="a" style="left:7.5px;top:13.5px;width:2px;height:2px;background:#ddd;"></div><div class="a" style="left:4px;top:19px;width:1.5px;height:2px;background:#eee;"></div><div class="a" style="left:9px;top:19px;width:1.5px;height:2px;background:#eee;"></div><div class="a" style="left:14px;top:19px;width:1.5px;height:2px;background:#eee;"></div><div class="a" style="left:2px;top:23.5px;width:29px;height:1px;background:#3a8fc0;"></div><div class="a" style="left:30.5px;top:22.5px;width:2px;height:2px;background:#49a6dc;border-radius:1px"></div><div class="a" style="left:7px;top:27.5px;width:30px;height:1px;background:#3a8fc0;"></div><div class="a" style="left:36px;top:26.5px;width:2px;height:2px;background:#49a6dc;border-radius:1px"></div><div class="a" style="left:2px;top:27px;width:3px;height:1.5px;background:#ccc;"></div></div>

<div class="pi" style="top:598.2px;height:41.2px"><div class="t" style="top:12.8px">Karte</div></div><div class="th" style="left:157.3px;top:603.1px;width:58.1px;height:31.0px;background:#efe9dc;border-radius:2px"><div class="a" style="left:0px;top:0px;width:58px;height:4.2px;background:#1f1f1f;"></div><svg style="left:0;top:4.200px" width="58" height="27" viewBox="0 0 58 27"><rect width="58" height="27" fill="#efe9dc"/><path d="M0 12c6-1 10 0 16 1 8 1.500 14 2 20 4l2 10H0z" fill="#b7d3a0"/><path d="M0 15c7-1.500 14 0 22 1.500l8 2.500" stroke="#8a8a80" stroke-width="1" fill="none"/><path d="M40 0l6 27" stroke="#f0a030" stroke-width="2.200"/><path d="M41.500 0l6 27" stroke="#e05030" stroke-width=".8"/><path d="M48 0c0 5-2 8-3 12" stroke="#9cc3e8" stroke-width="1" fill="none"/><path d="M12 2l8 6M28 3v9" stroke="#d8d0c0" stroke-width=".7"/><circle cx="28.500" cy="13" r="1.600" fill="#222"/><rect x="53" y="17" width="4" height="7" fill="#fff"/></svg></div>

<div class="pi" style="top:648.3px;height:41.3px"><div class="t" style="top:12.7px">Thermostat</div></div><div class="th" style="left:185.2px;top:653.0px;width:30.8px;height:32.0px;background:#2d2d2d;border-radius:4px"><svg style="left:0;top:0" width="31" height="32" viewBox="0 0 31 32"><path d="M7.800 23.500A11.200 11.200 0 1 1 24.500 22" fill="none" stroke="#d8d8d8" stroke-width=".8"/><rect x="3.700" y="16.500" width="2.200" height="2.200" fill="#fff"/><path d="M5.500 19l3 3.500" stroke="#111" stroke-width="1.200"/><rect x="12.500" y="10.800" width="5.500" height="1.400" fill="#ddd"/><rect x="13.500" y="14" width="3.500" height="1" fill="#999"/><rect x="8" y="28.500" width="2" height="1.300" fill="#888"/><rect x="12" y="28.500" width="7" height="1.300" fill="#3f79b5"/><rect x="21" y="28.500" width="2" height="1.300" fill="#888"/></svg></div>

<div class="pi" style="top:698.4px;height:43.0px"><div class="t" style="top:3.6px">Istwert mit</div><div class="t" style="top:23.6px">Diagramm</div></div><div class="th" style="left:155.9px;top:705.0px;width:60.1px;height:30.1px;background:#2d2d2d;border-radius:4px"><svg style="left:0;top:0" width="60.100" height="30.100" viewBox="0 0 60.100 30.100"><path d="M0 14.500h33c3 0 5-3 8-3s5 2 8 2.500 7-.5 11.100-1.500V30.100H0z" fill="#7f6128"/><rect x="40.700" y="16.700" width="19.400" height="13.400" fill="#767069"/><rect x="0" y="1.500" width="31" height="2.600" fill="#e4e4e4" opacity=".85"/><rect x="1.500" y="6.500" width="1.500" height="3" fill="#e2a21a"/><rect x="4" y="7.500" width="9" height="1.300" fill="#a8842e"/><rect x="45.500" y="6.500" width="2" height="3" fill="#3f87d6"/><rect x="48.500" y="7.500" width="9" height="1.300" fill="#3565a0"/></svg></div>

<div class="pi" style="top:750.1px;height:43.5px"><div class="t" style="top:2.9px">Schalter oder</div><div class="t" style="top:23.9px">Knöpfe</div></div><div class="th" style="left:155.9px;top:760.0px;width:60.1px;height:23.8px;background:#2b2b2b;border-radius:4px"><div class="a" style="left:2.5px;top:3.5px;width:14px;height:2px;background:#e2e2e2;"></div><div class="a" style="left:10.5px;top:9.5px;width:1.8px;height:3px;background:#aaa;"></div><div class="a" style="left:29px;top:9.5px;width:1.8px;height:3px;background:#3f8ee0;"></div><div class="a" style="left:47.5px;top:9.5px;width:1.8px;height:3px;background:#aaa;"></div><div class="a" style="left:5.5px;top:16.5px;width:12px;height:1.1px;background:#999;"></div><div class="a" style="left:25px;top:16.5px;width:9px;height:1.1px;background:#3f7fc8;"></div><div class="a" style="left:42.5px;top:16.5px;width:12px;height:1.1px;background:#999;"></div><div class="a" style="left:29.5px;top:19.5px;width:1px;height:1.5px;background:#3f7fc8;"></div></div>

<div class="pi" style="top:802.3px;height:41.6px"><div class="t" style="top:12.7px">Themenwechsler</div></div><div class="th" style="left:184.1px;top:808.6px;width:30.6px;height:28.4px;background:#000000;border-radius:0px"><svg style="left:9px;top:8px" width="13" height="13" viewBox="0 0 24 24" fill="#fff"><use href="#i-bright"/></svg></div>

<div class="pi" style="top:852.4px;height:37.2px"><div class="t" style="top:10.6px">HTML-Vorlage</div></div><div class="th" style="left:156.4px;top:860.2px;width:59.2px;height:20.5px;background:#2a2a2a;border-radius:3px"><div class="a" style="left:3px;top:3.5px;width:25px;height:1.8px;background:#e0e0e0;"></div><div class="a" style="left:3px;top:8px;width:17px;height:1.2px;background:#aaa;"></div><div class="a" style="left:21px;top:8px;width:9px;height:1.2px;background:#4a8fd8;"></div></div>

<div class="pi" style="top:898.3px;height:41.6px"><div class="t" style="top:12.7px">Wäschetrockner</div></div><div class="th" style="left:191.0px;top:903.0px;width:24.6px;height:31.5px;background:#2d2d2d;border-radius:4px"><svg style="left:0;top:0" width="24.600" height="31.500" viewBox="0 0 24.600 31.500"><rect x="3" y="2" width="6" height="2.600" fill="none" stroke="#3f79b5" stroke-width=".6"/><circle cx="14.500" cy="3.300" r="1" fill="#ddd"/><circle cx="17.500" cy="3.300" r="1" fill="#ddd"/><circle cx="20.500" cy="3.300" r="1" fill="#3ecf3e"/><circle cx="12.300" cy="16.400" r="6.400" fill="#3a3a3a" stroke="#3f79b5" stroke-width="1.500"/><rect x="9.500" y="15.500" width="5.600" height="1.600" fill="#cfcfcf"/><rect x="10.500" y="28" width="4" height="1" fill="#2f8f4f"/></svg></div>

<div class="acc" style="top:969.800px;height:28.200px"></div>
<svg style="left:11px;top:974px" width="18" height="19" viewBox="0 0 18 19"><path d="M9 1l7.500 4.300v8.600L9 18.200 1.500 13.900V5.300z" fill="#2f62a8"/><path d="M9 5.500l5.500 3.200v5L9 16.900l-5.500-3.200v-5z" fill="#e9e0d4"/><path d="M3.500 11.500L9 14.700l5.500-3.200v2.200L9 16.900l-5.500-3.200z" fill="#d8432c"/><path d="M6 9.500l3 1.700 3-1.700" stroke="#c0392b" stroke-width="1" fill="none"/></svg>
<div class="t" style="left:37.800px;top:975.200px;font-size:13.250px;-webkit-text-stroke:.45px #fff">SweetHome 3D</div>
<svg class="ic" style="left:205.200px;top:972px" width="24" height="24" viewBox="0 0 24 24"><use href="#i-more"/></svg>
<div class="acc" style="top:1007.500px;height:34.500px"></div>
<div class="a" style="left:10px;top:1010px;width:20px;height:19.600px;background:#cbdec4"></div>
<svg style="left:14px;top:1013px;opacity:.55" width="12" height="13" viewBox="0 0 12 13" fill="none" stroke="#eef6ea" stroke-width="1"><path d="M3 7.500a2.500 2.500 0 0 1 .500-5 3 3 0 0 1 5.600.800A2.100 2.100 0 0 1 9 7.500zM4 9.500v2M6 9.500v2M8 9.500v2"/></svg>
<div class="t" style="left:37.800px;top:1010.900px;font-size:13.350px;-webkit-text-stroke:.45px #fff">Heizungs- und Wetter-</div>
<div class="t" style="left:37.800px;top:1025.700px;font-size:13.350px;-webkit-text-stroke:.45px #fff">Widgets</div>
<svg class="ic" style="left:205.200px;top:1012.900px" width="24" height="24" viewBox="0 0 24 24"><use href="#i-more"/></svg>
<div class="acc" style="top:1051.600px;height:22px;border-radius:4px 4px 0 0"></div>
<div class="t" style="left:10px;top:1058.900px;font-size:13.200px;-webkit-text-stroke:.45px #fff">Gestylt</div>
<svg class="ic" style="left:205.200px;top:1053.800px" width="24" height="24" viewBox="0 0 24 24"><use href="#i-more"/></svg>
<div class="a" style="left:245.500px;top:577px;width:3px;height:27px;background:#4e4b5e;border-radius:2px"></div>
<!--LEFT-END-->

<!-- ================= CENTER ================= -->
<div class="a" style="left:244px;top:102px;width:8px;height:978px;background:#000"></div>
<div class="a" style="left:246px;top:579px;width:4px;height:24px;background:#4a4858;border-radius:2px"></div>
<div class="a" style="left:1608px;top:102px;width:8px;height:978px;background:#000"></div>
<div class="a" style="left:1610px;top:579px;width:4px;height:24px;background:#4a4858;border-radius:2px"></div>
<svg style="left:258.0px;top:115.1px;fill:#2aa42a;" width="23" height="23" viewBox="0 0 24 24"><use href="#i-play"/></svg>
<svg style="left:291.1px;top:114.6px;fill:#fff;" width="24" height="24" viewBox="0 0 24 24"><use href="#i-layers"/></svg>
<svg style="left:332px;top:112px" width="24" height="23" viewBox="0 0 24 23"><path d="M1.500 1h21l-.6 4H2.100z" fill="#d9d9d9"/><rect x="7" y="1.800" width="10" height="1.600" fill="#555"/><path d="M2 5.200h20l-1.800 16.300a1 1 0 0 1-1 .9H4.800a1 1 0 0 1-1-.9z" fill="#f4f4f4"/><path d="M2 5.200h20l-.2 1.500H2.200z" fill="#bbb"/></svg>
<div class="t" style="left:364.0px;top:115px;font-size:14.5px;-webkit-text-stroke:.45px #fff">Geschirrspüler</div>
<svg style="left:464.4px;top:112.7px;fill:#fff;" width="21" height="21" viewBox="0 0 24 24"><use href="#i-close"/></svg>
<svg style="left:517.3px;top:114.500px" width="17" height="17" viewBox="0 0 17 17" fill="#d0d0d0"><rect x="5.500" y="4.500" width="6" height="8.500" rx="1"/><rect x="6.800" y="2.800" width="3.400" height="2.500" rx=".8"/><rect x="6.700" y="6.500" width="3.600" height="2" fill="#111"/><path d="M1 2.500l2-1.500 1.300 1.700-2 1.500zM16 2.500l-2-1.500-1.300 1.700 2 1.500zM1 14.500l2 1.500 1.300-1.700-2-1.500zM16 14.500l-2 1.500-1.300-1.700 2-1.500z"/><path d="M3.200 4l2 2M13.800 4l-2 2M3.200 13l2-2M13.800 13l-2-2" stroke="#d0d0d0" stroke-width="1"/></svg>
<div class="t" style="left:546.0px;top:115px;font-size:14.6px;-webkit-text-stroke:.45px #fff">Alarmanlage</div>
<svg style="left:633.3px;top:112.7px;fill:#fff;" width="21" height="21" viewBox="0 0 24 24"><use href="#i-close"/></svg>
<svg style="left:686px;top:114.5px" width="18" height="18" viewBox="0 0 18 18" fill="none" stroke="#d0d0d0" stroke-width="1.300"><path d="M2 9.500L9 2.500l7 7M4.200 8v8h9.600V8"/></svg>
<div class="t" style="left:715.0px;top:115px;font-size:14.3px;-webkit-text-stroke:.45px #fff">SweetHome3D</div>
<svg style="left:816.3px;top:112.7px;fill:#fff;" width="21" height="21" viewBox="0 0 24 24"><use href="#i-close"/></svg>
<svg style="left:868.5px;top:114.500px" width="18" height="17" viewBox="0 0 18 17" fill="none" stroke="#9a9a9a" stroke-width="1.300"><path d="M1.500 1v14.500H17M3.500 11.500l3.500-4.500 2.500 2.500 3-4.500 1.500 1.500 2.500-3"/></svg>
<div class="t" style="left:898.7px;top:115px;font-size:14.0px;-webkit-text-stroke:.45px #fff">E-Charts</div>
<svg style="left:959.7px;top:112.7px;fill:#fff;" width="21" height="21" viewBox="0 0 24 24"><use href="#i-close"/></svg>
<svg style="left:1013px;top:115px" width="16" height="16" viewBox="0 0 16 16" fill="none" stroke="#d0d0d0" stroke-width="1.200"><path d="M5.500 12.500V3l8-1.500v9.500"/><ellipse cx="3.800" cy="12.700" rx="1.900" ry="1.500"/><ellipse cx="11.800" cy="11.200" rx="1.900" ry="1.500"/><path d="M5.500 5.200l8-1.500"/></svg>
<div class="t" style="left:1041.0px;top:115px;font-size:14.9px;-webkit-text-stroke:.45px #fff">Multimedia</div>
<svg style="left:1119.6px;top:112.7px;fill:#fff;" width="21" height="21" viewBox="0 0 24 24"><use href="#i-close"/></svg>
<svg style="left:1169px;top:112px" width="24" height="23" viewBox="0 0 24 23"><path d="M1.500 1h21l-.6 4H2.100z" fill="#d9d9d9"/><rect x="7" y="1.800" width="10" height="1.600" fill="#555"/><path d="M2 5.200h20l-1.800 16.300a1 1 0 0 1-1 .9H4.800a1 1 0 0 1-1-.9z" fill="#f4f4f4"/><path d="M2 5.200h20l-.2 1.500H2.200z" fill="#bbb"/></svg>
<div class="t" style="left:1200.6px;top:115px;font-size:14.5px;-webkit-text-stroke:.45px #fff">Geschirrspüler</div>
<svg style="left:1301.5px;top:112.7px;fill:#fff;" width="21" height="21" viewBox="0 0 24 24"><use href="#i-close"/></svg>
<svg style="left:1354.5px;top:114.500px" width="17" height="17" viewBox="0 0 17 17" fill="#d0d0d0"><rect x="5.500" y="4.500" width="6" height="8.500" rx="1"/><rect x="6.800" y="2.800" width="3.400" height="2.500" rx=".8"/><rect x="6.700" y="6.500" width="3.600" height="2" fill="#111"/><path d="M1 2.500l2-1.500 1.300 1.700-2 1.500zM16 2.500l-2-1.500-1.300 1.700 2 1.500zM1 14.500l2 1.500 1.300-1.700-2-1.500zM16 14.500l-2 1.500-1.300-1.700 2-1.500z"/><path d="M3.200 4l2 2M13.800 4l-2 2M3.200 13l2-2M13.800 13l-2-2" stroke="#d0d0d0" stroke-width="1"/></svg>
<div class="t" style="left:1382.8px;top:115px;font-size:14.6px;-webkit-text-stroke:.45px #fff">Alarmanlage</div>
<svg style="left:1470.3px;top:112.7px;fill:#fff;" width="21" height="21" viewBox="0 0 24 24"><use href="#i-close"/></svg>
<svg style="left:1520px;top:112px;" width="22" height="22" viewBox="0 0 22 22"><path d="M1 10.500L11 2l10 8.500z" fill="#c9c2b4"/><rect x="3" y="10.200" width="16" height="9.300" fill="#ece8dc"/><rect x="5" y="12" width="3" height="4" fill="#7d8a8f"/><rect x="9.500" y="12" width="3" height="7.500" fill="#a59a86"/><rect x="14" y="12" width="3" height="4" fill="#7d8a8f"/><rect x="9.800" y="5.500" width="2.400" height="2.600" fill="#7d8a8f"/><rect x="1.500" y="19.200" width="19" height="1.800" fill="#7e8a4c"/></svg>
<svg style="left:1579.2px;top:115.0px;fill:#fff;" width="24" height="24" viewBox="0 0 24 24"><use href="#i-clearall"/></svg>
<div class="a" style="left:252px;top:148px;width:1356px;height:921px;background:#021c2b"></div>
<div class="a" style="left:308px;top:148px;width:1300px;height:48px;background:#10465f"></div>
<div class="a" style="left:252px;top:148px;width:51px;height:921px;background:#0b1a21"></div>
<div class="a" style="left:252px;top:148px;width:56px;height:49px;background:#0b1a21;border-bottom:1px solid #1c2a31"></div>
<svg style="left:269.2px;top:161.3px;fill:#fff;" width="24" height="24" viewBox="0 0 24 24"><use href="#i-cl"/></svg>
<svg style="left:330px;top:161px" width="20" height="21" viewBox="0 0 20 21" fill="none" stroke="#5b6d78" stroke-width="1.300"><path d="M1 9L10 1.500 19 9z" fill="#5b6d78"/><path d="M3 9v10.500h14V9"/><rect x="6.500" y="11.500" width="7" height="6" rx="1.500"/><rect x="8.500" y="13.200" width="3" height="2.600" rx=".6" stroke-width="1"/></svg>
<div class="t" style="left:420.7px;top:165px;font-size:18.3px;color:#5c7785">Test</div>
<div class="a" style="left:303px;top:196.500px;width:5px;height:872px;background:#5e5e5e"></div>
<div class="a" style="left:303px;top:196.500px;width:5px;height:393px;background:#303030;border-radius:0 0 2.500px 2.500px"></div>
<div class="a" style="left:252px;top:1068.800px;width:1356px;height:5.400px;background:#cdcdcd"></div>
<div class="a" style="left:252px;top:1068.800px;width:1340px;height:5.400px;background:#5c5c5c;border-radius:0 3px 3px 0"></div>
<svg style="left:272.5px;top:221px" width="15" height="15" viewBox="0 0 16 16" fill="none" stroke="#7b8388" stroke-width="1.200"><path d="M5.500 12.500V3l8-1.500v9.500"/><ellipse cx="3.800" cy="12.700" rx="1.900" ry="1.500"/><ellipse cx="11.800" cy="11.200" rx="1.900" ry="1.500"/><path d="M5.500 5.200l8-1.500"/></svg>
<svg style="left:267px;top:265px;opacity:.45" width="25" height="25" viewBox="0 0 24 23"><path d="M1.500 1h21l-.6 4H2.100z" fill="#9aa"/><rect x="7" y="1.800" width="10" height="1.600" fill="#333"/><path d="M2 5.200h20l-1.800 16.300a1 1 0 0 1-1 .9H4.800a1 1 0 0 1-1-.9z" fill="#c8cdd0"/></svg>
<svg style="left:271.5px;top:316px" width="17" height="17" viewBox="0 0 17 17" fill="#7b8388"><rect x="5.500" y="4.500" width="6" height="8.500" rx="1"/><rect x="6.800" y="2.800" width="3.400" height="2.500" rx=".8"/><rect x="6.700" y="6.500" width="3.600" height="2" fill="#111"/><path d="M1 2.500l2-1.500 1.300 1.700-2 1.500zM16 2.500l-2-1.500-1.300 1.700 2 1.500zM1 14.500l2 1.500 1.300-1.700-2-1.500zM16 14.500l-2 1.500-1.300-1.700 2-1.500z"/><path d="M3.200 4l2 2M13.800 4l-2 2M3.200 13l2-2M13.800 13l-2-2" stroke="#7b8388" stroke-width="1"/></svg>
<svg style="left:267px;top:360px;opacity:.7;transform:scale(1.1);transform-origin:0 0" width="22" height="22" viewBox="0 0 22 22"><path d="M1 10.500L11 2l10 8.500z" fill="#8f8f88"/><rect x="3" y="10.200" width="16" height="9.300" fill="#b4b2a8"/><rect x="5" y="12" width="3" height="4" fill="#4a5357"/><rect x="9.500" y="12" width="3" height="7.500" fill="#77705f"/><rect x="14" y="12" width="3" height="4" fill="#4a5357"/><rect x="9.800" y="5.500" width="2.400" height="2.600" fill="#4a5357"/><rect x="1.500" y="19.200" width="19" height="1.800" fill="#5d6540"/></svg>
<svg style="left:272px;top:412.5px" width="16" height="16" viewBox="0 0 18 18" fill="none" stroke="#7b8388" stroke-width="1.300"><path d="M2 9.500L9 2.500l7 7M4.200 8v8h9.600V8"/></svg>
<svg style="left:272px;top:465px" width="17" height="12" viewBox="0 0 17 12" fill="none" stroke="#7b8388" stroke-width=".9"><path d="M1 2h8M1 4.500h7M1 7h6M1 9.500h8"/><rect x="9.500" y="5" width="5" height="5.500" rx="1"/><path d="M12 1l1 2.500M15 2l-1.200 2M16.500 5h-1.500"/></svg>
<svg style="left:273px;top:513.5px" width="14" height="7" viewBox="0 0 14 7" fill="none" stroke="#7b8388" stroke-width=".9"><rect x="1.800" y="1" width="11.400" height="3.600" rx="1.500"/><path d="M0.500 6l2.500-1h2M3 3h6"/></svg>
<svg style="left:272px;top:560.5px" width="18" height="9" viewBox="0 0 18 9" fill="none" stroke="#7b8388" stroke-width=".9"><rect x=".500" y=".500" width="17" height="8"/><rect x="5" y="2.500" width="7" height="3" fill="#7b8388" stroke="none"/><rect x="2" y="3" width="1.200" height="1.200" fill="#7b8388" stroke="none"/></svg>
<svg style="left:273px;top:621.5px" width="14" height="7" viewBox="0 0 14 7" fill="none" stroke="#7b8388" stroke-width=".9"><rect x="1.800" y="1" width="11.400" height="3.600" rx="1.500"/><path d="M0.500 6l2.500-1h2M3 3h6"/></svg>
<div class="t" style="left:274.5px;top:678px;font-size:14.5px;color:#7b8388">R</div>
<svg style="left:273px;top:741.5px" width="14" height="7" viewBox="0 0 14 7" fill="none" stroke="#7b8388" stroke-width=".9"><rect x="1.800" y="1" width="11.400" height="3.600" rx="1.500"/><path d="M0.500 6l2.500-1h2M3 3h6"/></svg>
<svg style="left:272px;top:796px" width="17" height="18" viewBox="0 0 17 18" fill="none" stroke="#7b8388" stroke-width="1"><path d="M3.500 1v16M6.500 1v16M10.500 1v16M13.500 1v16M1 4h15M1 14h15"/></svg>
<svg style="left:266.800px;top:863px;fill:#8a9196" width="28" height="28" viewBox="0 0 24 24"><path d="M19 8h-1V3H6v5H5c-1.660 0-3 1.340-3 3v6h4v4h12v-4h4v-6c0-1.660-1.340-3-3-3zM8 5h8v3H8V5zm8 12v2H8v-4h8v2zm2-2v-2H6v2H4v-4c0-.550.450-1 1-1h14c.550 0 1 .450 1 1v4h-2z"/><circle cx="18" cy="11.500" r="1"/></svg>
<svg style="left:271.500px;top:939px" width="18" height="18" viewBox="0 0 18 18" fill="none" stroke="#7b8388" stroke-width=".9"><path d="M1 .500h16M1 1v9M17 1v9M2 9l2.500-7 3 8 3-8 3 7 2-5"/><rect x="1.500" y="12.500" width="15" height="4.500"/><path d="M4 14v1.500M6.500 14v1.500M9 14v1.500M11.500 14v1.500M14 14v1.500"/></svg>
<svg style="left:273px;top:989px" width="16" height="16" viewBox="0 0 16 16" fill="none" stroke="#4f5a61" stroke-width="1.100"><rect x="1" y="1" width="14" height="14" rx="2.500"/><path d="M8 3v10"/></svg>
<svg style="left:271.500px;top:1036px" width="18" height="20" viewBox="0 0 18 20" fill="none" stroke="#7b8388" stroke-width="1"><rect x="1" y="10.500" width="12" height="3" rx="1.300"/><path d="M6.500 13.500v5.500M12.500 9.500l2.500-2.500M15 3v2M12 4.500l1.300 1M18 4.500l-1.300 1M13.500 1.500l.8 1.200"/></svg>
<div class="a" style="left:308px;top:196px;width:1282px;height:802px;border-right:1px dashed #e8e8e8;border-bottom:1px dashed #e8e8e8"></div>
<div class="a" style="left:308px;top:196px;width:421px;height:800px;border:1px dashed #cdc7c2;z-index:5"></div>
<div class="a" style="left:738px;top:196px;width:421px;height:800px;border:1px dashed #cdc7c2;z-index:5"></div>
<div class="a" style="left:1167px;top:196px;width:421px;height:800px;border:1px dashed #cdc7c2;z-index:5"></div>
<div class="a" style="left:313px;top:201px;width:411px;height:101.700px;background:#0f2a38;border-radius:4px;box-shadow:0 1px 3px rgba(0,0,0,.5)"></div>
<div class="t" style="left:393.3px;top:226px;font-size:15px;">25.06.2025</div>
<svg style="left:476.2px;top:221.6px;fill:#fff;" width="25" height="25" viewBox="0 0 24 24"><use href="#i-cl"/></svg>
<svg style="left:516.8px;top:221.6px;fill:#4d6370;" width="25" height="25" viewBox="0 0 24 24"><use href="#i-cr"/></svg>
<div class="a" style="left:549px;top:216px;width:75px;height:36px;background:#2a444f;border-radius:4px"></div>
<div class="t m" style="left:586.1px;top:227px;font-size:13.6px;color:#5b7480;letter-spacing:.4px;transform:translateX(-50%)">JETZT</div>
<div class="a" style="left:372.800px;top:254px;width:291.200px;height:36px;background:#e0e0e0;border-radius:4px"></div>
<div class="a" style="left:372.800px;top:254px;width:59.200px;height:36px;background:#4ea9f5;border-radius:4px 0 0 4px"></div>
<div class="t" style="left:402.5px;top:265px;font-size:13.3px;color:#1b2a36;letter-spacing:.45px;transform:translateX(-50%);-webkit-text-stroke:.25px #1b2a36">TAG</div>
<div class="t" style="left:473.0px;top:265px;font-size:13.3px;color:#1b2a36;letter-spacing:.45px;transform:translateX(-50%);-webkit-text-stroke:.25px #1b2a36">WOCHE</div>
<div class="t" style="left:554.8px;top:265px;font-size:13.3px;color:#1b2a36;letter-spacing:.45px;transform:translateX(-50%);-webkit-text-stroke:.25px #1b2a36">MONAT</div>
<div class="t" style="left:629.7px;top:265px;font-size:13.3px;color:#1b2a36;letter-spacing:.45px;transform:translateX(-50%);-webkit-text-stroke:.25px #1b2a36">JAHR</div>
<div class="a" style="left:311.400px;top:323.800px;width:411.500px;height:192px;background:#0f2a38;border-radius:4px;box-shadow:0 1px 3px rgba(0,0,0,.5)"></div>
<svg style="left:311px;top:323px" width="412" height="193" viewBox="311 323 412 193"><rect x="449.300" y="344.900" width="25" height="14.200" rx="2.500" fill="#0ea5f3"/><text x="479.800" y="356.900" font-family="Liberation Sans, sans-serif" font-size="12.900" fill="#fff">Aussentemperatur</text><rect x="358" y="380.0" width="339.200" height="1" fill="#e3e9ec"/><rect x="358" y="395.1" width="339.200" height="1" fill="#e3e9ec"/><rect x="358" y="410.1" width="339.200" height="1" fill="#e3e9ec"/><rect x="358" y="425.1" width="339.200" height="1" fill="#e3e9ec"/><rect x="358" y="440.1" width="339.200" height="1" fill="#e3e9ec"/><rect x="358" y="455.2" width="339.200" height="1" fill="#e3e9ec"/><text x="350.800" y="385.1" text-anchor="end" font-family="Liberation Sans, sans-serif" font-size="12.800" fill="#808b91">30</text><text x="350.800" y="400.20000000000005" text-anchor="end" font-family="Liberation Sans, sans-serif" font-size="12.800" fill="#808b91">25</text><text x="350.800" y="415.20000000000005" text-anchor="end" font-family="Liberation Sans, sans-serif" font-size="12.800" fill="#808b91">20</text><text x="350.800" y="430.20000000000005" text-anchor="end" font-family="Liberation Sans, sans-serif" font-size="12.800" fill="#808b91">15</text><text x="350.800" y="445.20000000000005" text-anchor="end" font-family="Liberation Sans, sans-serif" font-size="12.800" fill="#808b91">10</text><text x="350.800" y="460.3" text-anchor="end" font-family="Liberation Sans, sans-serif" font-size="12.800" fill="#808b91">5</text><text x="350.800" y="475.20000000000005" text-anchor="end" font-family="Liberation Sans, sans-serif" font-size="12.800" fill="#808b91">0</text><rect x="360.20" y="410.6" width="10.100" height="60.0" fill="#0ea5f3"/><rect x="374.33" y="410.6" width="10.100" height="60.0" fill="#0ea5f3"/><rect x="388.46" y="413.6" width="10.100" height="57.0" fill="#0ea5f3"/><rect x="402.59" y="416.6" width="10.100" height="54.0" fill="#0ea5f3"/><rect x="416.72" y="416.6" width="10.100" height="54.0" fill="#0ea5f3"/><rect x="430.85" y="419.6" width="10.100" height="51.0" fill="#0ea5f3"/><rect x="444.98" y="419.6" width="10.100" height="51.0" fill="#0ea5f3"/><rect x="459.11" y="413.6" width="10.100" height="57.0" fill="#0ea5f3"/><rect x="473.24" y="407.6" width="10.100" height="63.0" fill="#0ea5f3"/><rect x="487.37" y="401.6" width="10.100" height="69.0" fill="#0ea5f3"/><rect x="501.50" y="395.6" width="10.100" height="75.0" fill="#0ea5f3"/><rect x="515.63" y="389.6" width="10.100" height="81.0" fill="#0ea5f3"/><rect x="529.76" y="386.6" width="10.100" height="84.0" fill="#0ea5f3"/><rect x="358" y="470.100" width="339.200" height="1" fill="#6e7e87"/><rect x="357.5" y="470.600" width="1" height="4" fill="#6e7e87"/><text x="365.3" y="488.600" text-anchor="middle" font-family="Liberation Sans, sans-serif" font-size="12.400" fill="#808b91">00:00</text><rect x="399.9" y="470.600" width="1" height="4" fill="#6e7e87"/><text x="407.7" y="488.600" text-anchor="middle" font-family="Liberation Sans, sans-serif" font-size="12.400" fill="#808b91">03:00</text><rect x="442.3" y="470.600" width="1" height="4" fill="#6e7e87"/><text x="450.1" y="488.600" text-anchor="middle" font-family="Liberation Sans, sans-serif" font-size="12.400" fill="#808b91">06:00</text><rect x="484.7" y="470.600" width="1" height="4" fill="#6e7e87"/><text x="492.5" y="488.600" text-anchor="middle" font-family="Liberation Sans, sans-serif" font-size="12.400" fill="#808b91">09:00</text><rect x="527.1" y="470.600" width="1" height="4" fill="#6e7e87"/><text x="534.9" y="488.600" text-anchor="middle" font-family="Liberation Sans, sans-serif" font-size="12.400" fill="#808b91">12:00</text><rect x="569.5" y="470.600" width="1" height="4" fill="#6e7e87"/><text x="577.3" y="488.600" text-anchor="middle" font-family="Liberation Sans, sans-serif" font-size="12.400" fill="#808b91">15:00</text><rect x="611.9" y="470.600" width="1" height="4" fill="#6e7e87"/><text x="619.7" y="488.600" text-anchor="middle" font-family="Liberation Sans, sans-serif" font-size="12.400" fill="#808b91">18:00</text><rect x="654.3" y="470.600" width="1" height="4" fill="#6e7e87"/><text x="662.1" y="488.600" text-anchor="middle" font-family="Liberation Sans, sans-serif" font-size="12.400" fill="#808b91">21:00</text><rect x="696.7" y="470.600" width="1" height="4" fill="#6e7e87"/><g fill="none" stroke="#6e7e87" stroke-width="1"><path d="M660.500 352l7.600-3.500 7.600 3.500-7.600 3.500zM660.500 354.500l7.600 3.500 7.600-3.500M660.500 357l7.600 3.500 7.600-3.500" fill="#6e7e87" fill-opacity=".5"/><path d="M688.500 347.500h8l3.500 3.500v11h-11.500zM691 352.500h5M691 355.500h7M691 358.500h7"/></g></svg>
<div class="a" style="left:308.500px;top:201px;width:94.500px;height:13px;background:#8d9ba3;border-radius:0 0 4px 0"></div>
<div class="t" style="left:312.2px;top:203px;font-size:9.8px;color:#0c171d;-webkit-text-stroke:.2px #0c171d">w000696</div>
<svg style="left:356.5px;top:201px" width="46" height="13" viewBox="0 0 46 13" fill="none"><path d="M10.500 2.500v4H1.500M4.500 3.500l-3 3 3 3" stroke="#3a474e" stroke-width="1.100"/><path d="M17.500 2v9M27.500 2v9M19 6.500h7M20.800 4.500l-2 2 2 2M25.200 4.500l2 2-2 2" stroke="#197a2e" stroke-width="1.200"/><g stroke="#197a2e" stroke-width="1.200"><circle cx="37.500" cy="2.800" r="1.300"/><path d="M37.500 4.200v7.300M34.800 6h5.400M32.800 7.500c0 2.500 2 4 4.700 4s4.700-1.500 4.700-4"/></g></svg>
<div class="a" style="left:697.700px;top:201px;width:31px;height:13px;background:#8d9ba3;border-radius:0 0 0 4px"></div>
<div class="t" style="left:708.5px;top:202px;font-size:10.5px;color:#0c171d;-webkit-text-stroke:.2px #0c171d">1</div>
<svg style="left:713.5px;top:200.8px;fill:#0c171d;" width="13" height="13" viewBox="0 0 24 24"><use href="#i-down"/></svg>
<div class="a" style="left:307.300px;top:306.500px;width:59.500px;height:12.200px;background:#fff;border-radius:2px"></div>
<div class="t" style="left:310.5px;top:308px;font-size:9.8px;color:#111">w000695</div>
<svg style="left:353.500px;top:306.500px" width="11" height="12" viewBox="32 0 11 13" fill="none"><g stroke="#333" stroke-width="1.100"><circle cx="37.500" cy="2.800" r="1.300"/><path d="M37.500 4.200v7.300M34.800 6h5.400M32.800 7.500c0 2.500 2 4 4.700 4s4.700-1.500 4.700-4"/></g></svg>
<div class="a" style="left:742px;top:200.300px;width:412px;height:216.600px;background:#0f2536;border-radius:4px;box-shadow:0 1px 3px rgba(0,0,0,.5)"></div>
<div class="t" style="left:758.6px;top:224px;font-size:23.3px;">Badfenster</div>
<div class="a" style="left:738px;top:201px;width:94px;height:13px;background:#8d9ba3;border-radius:0 0 4px 0"></div>
<div class="t" style="left:741.5px;top:203px;font-size:9.8px;color:#0c171d;-webkit-text-stroke:.2px #0c171d">w000698</div>
<svg style="left:785.8px;top:201px" width="46" height="13" viewBox="0 0 46 13" fill="none"><path d="M10.500 2.500v4H1.500M4.500 3.500l-3 3 3 3" stroke="#3a474e" stroke-width="1.100"/><path d="M17.500 2v9M27.500 2v9M19 6.500h7M20.800 4.500l-2 2 2 2M25.200 4.500l2 2-2 2" stroke="#197a2e" stroke-width="1.200"/><g stroke="#197a2e" stroke-width="1.200"><circle cx="37.500" cy="2.800" r="1.300"/><path d="M37.500 4.200v7.300M34.800 6h5.400M32.800 7.500c0 2.500 2 4 4.700 4s4.700-1.500 4.700-4"/></g></svg>
<div class="a" style="left:1113px;top:201px;width:45.500px;height:13px;background:#8d9ba3;border-radius:0 0 0 4px"></div>
<div class="t" style="left:1122.5px;top:202px;font-size:10.5px;color:#0c171d;-webkit-text-stroke:.2px #0c171d">2</div>
<svg style="left:1129.0px;top:200.8px;fill:#0c171d;" width="13" height="13" viewBox="0 0 24 24"><use href="#i-up"/></svg>
<svg style="left:1143.0px;top:200.8px;fill:#0c171d;" width="13" height="13" viewBox="0 0 24 24"><use href="#i-down"/></svg>
<svg style="left:855px;top:265px" width="186" height="136" viewBox="855 265 186 136"><defs><linearGradient id="gl" x1="0" y1="1" x2="1" y2="0"><stop offset="0" stop-color="#e2e7ee"/><stop offset=".22" stop-color="#c3cad3"/><stop offset=".42" stop-color="#a7b0bc"/><stop offset=".5" stop-color="#9fa8b4"/><stop offset=".62" stop-color="#c7cdd5"/><stop offset=".8" stop-color="#c0c6cf"/><stop offset="1" stop-color="#b2bac5"/></linearGradient></defs><rect x="860.700" y="269.900" width="174.600" height="115.400" fill="#d3d3d3" stroke="#f0f0f0" stroke-width="1.600"/><rect x="861" y="281.3" width="174" height=".8" fill="#a9a9a9"/><rect x="861" y="291.6" width="174" height=".8" fill="#a9a9a9"/><rect x="861" y="301.9" width="174" height=".8" fill="#a9a9a9"/><rect x="861" y="312.2" width="174" height=".8" fill="#a9a9a9"/><rect x="861" y="322.5" width="174" height=".8" fill="#a9a9a9"/><rect x="861" y="332.8" width="174" height=".8" fill="#a9a9a9"/><rect x="861" y="343.1" width="174" height=".8" fill="#a9a9a9"/><rect x="861" y="353.4" width="174" height=".8" fill="#a9a9a9"/><rect x="861" y="363.7" width="174" height=".8" fill="#a9a9a9"/><rect x="861" y="374.0" width="174" height=".8" fill="#a9a9a9"/><rect x="861" y="383" width="174" height="1" fill="#3b5fa8"/><rect x="945.600" y="269.200" width="4.600" height="116.700" fill="#e9e9e9" stroke="#bdbdbd" stroke-width=".6"/><path d="M862.500 271.300L937.400 284V396.900L862.500 383.600z" fill="url(#gl)" opacity=".93"/><path d="M1033.600 271.300L958.500 284V396.900L1033.600 383.600z" fill="url(#gl)" opacity=".93"/><rect x="863" y="281.3" width="74" height=".7" fill="#8f98a4" opacity=".55"/><rect x="959" y="281.3" width="74" height=".7" fill="#8f98a4" opacity=".55"/><rect x="863" y="291.6" width="74" height=".7" fill="#8f98a4" opacity=".55"/><rect x="959" y="291.6" width="74" height=".7" fill="#8f98a4" opacity=".55"/><rect x="863" y="301.9" width="74" height=".7" fill="#8f98a4" opacity=".55"/><rect x="959" y="301.9" width="74" height=".7" fill="#8f98a4" opacity=".55"/><rect x="863" y="312.2" width="74" height=".7" fill="#8f98a4" opacity=".55"/><rect x="959" y="312.2" width="74" height=".7" fill="#8f98a4" opacity=".55"/><rect x="863" y="322.5" width="74" height=".7" fill="#8f98a4" opacity=".55"/><rect x="959" y="322.5" width="74" height=".7" fill="#8f98a4" opacity=".55"/><rect x="863" y="332.8" width="74" height=".7" fill="#8f98a4" opacity=".55"/><rect x="959" y="332.8" width="74" height=".7" fill="#8f98a4" opacity=".55"/><rect x="863" y="343.1" width="74" height=".7" fill="#8f98a4" opacity=".55"/><rect x="959" y="343.1" width="74" height=".7" fill="#8f98a4" opacity=".55"/><rect x="863" y="353.4" width="74" height=".7" fill="#8f98a4" opacity=".55"/><rect x="959" y="353.4" width="74" height=".7" fill="#8f98a4" opacity=".55"/><rect x="863" y="363.7" width="74" height=".7" fill="#8f98a4" opacity=".55"/><rect x="959" y="363.7" width="74" height=".7" fill="#8f98a4" opacity=".55"/><rect x="863" y="374.0" width="74" height=".7" fill="#8f98a4" opacity=".55"/><rect x="959" y="374.0" width="74" height=".7" fill="#8f98a4" opacity=".55"/><path d="M930.500 346.800l9.200 1.400" stroke="#f4f4f4" stroke-width="1.600" stroke-linecap="round"/><path d="M960.300 344.800l9.200-1.700" stroke="#f4f4f4" stroke-width="1.600" stroke-linecap="round"/></svg>
<svg width="0" height="0" style="left:-10px;top:-10px"><defs><radialGradient id="rg"><stop offset="0" stop-color="#636363"/><stop offset=".55" stop-color="#4a4a4a"/><stop offset="1" stop-color="#303030"/></radialGradient></defs></svg>
<svg style="left:1168.400px;top:198.5px" width="39.600" height="39.2" viewBox="0 0 40 39.200"><rect width="40" height="39.200" fill="url(#rg)"/><path d="M15.750 3.800c-4.800 7.600-9.650 14.500-9.650 20.900a9.650 9.650 0 0 0 19.300 0c0-6.400-4.850-13.300-9.650-20.900z" fill="none" stroke="#1fb32a" stroke-width="1.300"/><path d="M10 25c0 3 2 5.500 5 6.200" fill="none" stroke="#1fb32a" stroke-width="1.100"/><path d="M28.900 4c-2.500 3.900-5 7.300-5 10.900a5 5 0 0 0 10 0c0-3.600-2.500-7-5-10.900z" fill="none" stroke="#1fb32a" stroke-width="1.200"/></svg>
<div class="t" style="left:1224.2px;top:211px;font-size:15.4px;transform:scaleX(.845);transform-origin:0 0">TEST</div>
<div class="t" style="right:348.0px;top:211px;font-size:15.4px;transform:scaleX(.885);transform-origin:100% 0">OFF</div>
<svg style="left:1168.400px;top:238.2px" width="39.600" height="39.2" viewBox="0 0 40 39.200"><rect width="40" height="39.200" fill="url(#rg)"/><path d="M20 5a9 9 0 0 0-5.500 16.100c1.400 1.200 2 2.600 2 4.400h7c0-1.800.600-3.200 2-4.400A9 9 0 0 0 20 5z" fill="none" stroke="#e6d80a" stroke-width="1.200"/><path d="M16.500 28.300h7M16.800 30.500h6.400M17.600 32.700h4.800" stroke="#e6d80a" stroke-width="1.200"/><path d="M20 1v2M8.500 4.500l2 2M31.500 4.500l-2 2M4 15h3M36 15h-3M8.500 26l2-2M31.500 26l-2-2" stroke="#e6d80a" stroke-width="1.200"/></svg>
<div class="t" style="left:1224.2px;top:251px;font-size:15.4px;transform:scaleX(.845);transform-origin:0 0">TEST</div>
<div class="t" style="right:348.0px;top:251px;font-size:15.4px;transform:scaleX(1);transform-origin:100% 0">ON</div>
<svg style="left:1168.400px;top:277.7px" width="39.600" height="39.2" viewBox="0 0 40 39.200"><rect width="40" height="39.200" fill="url(#rg)"/><path d="M20 5a9 9 0 0 0-5.500 16.100c1.400 1.200 2 2.600 2 4.400h7c0-1.800.600-3.200 2-4.400A9 9 0 0 0 20 5z" fill="#f3e800" stroke="#e6d80a" stroke-width="1.200"/><path d="M16.500 28.300h7M16.800 30.500h6.400M17.600 32.700h4.800" stroke="#e6d80a" stroke-width="1.200"/><path d="M20 1v2M8.500 4.500l2 2M31.500 4.500l-2 2M4 15h3M36 15h-3M8.500 26l2-2M31.500 26l-2-2" stroke="#e6d80a" stroke-width="1.200"/></svg>
<div class="t" style="left:1224.2px;top:291px;font-size:15.4px;transform:scaleX(.845);transform-origin:0 0">TEST</div>
<div class="t" style="right:348.0px;top:291px;font-size:15.4px;transform:scaleX(.885);transform-origin:100% 0">OFF</div>
<svg style="left:1168.400px;top:317.3px" width="39.600" height="39.2" viewBox="0 0 40 39.200"><rect width="40" height="39.200" fill="url(#rg)"/><path d="M20 5a9 9 0 0 0-5.500 16.100c1.400 1.200 2 2.600 2 4.400h7c0-1.800.600-3.200 2-4.400A9 9 0 0 0 20 5z" fill="none" stroke="#7c7c7c" stroke-width="1.200"/><path d="M16.500 28.300h7M16.800 30.500h6.400M17.600 32.700h4.800" stroke="#7c7c7c" stroke-width="1.200"/><path d="M16.800 10l6.400 6.400M23.200 10l-6.400 6.400" stroke="#7c7c7c" stroke-width="1"/></svg>
<div class="t" style="left:1224.2px;top:330px;font-size:15.4px;transform:scaleX(.845);transform-origin:0 0">TEST</div>
<div class="t" style="right:348.0px;top:330px;font-size:15.4px;transform:scaleX(.885);transform-origin:100% 0">OFF</div>
<div class="a" style="left:1167px;top:196px;width:421px;height:228px;border:1px dashed #d4d0cc;border-bottom:1px dashed #1a6ec2"></div>
<div class="a" style="left:1168.400px;top:197.300px;width:92.500px;height:12.400px;background:rgba(24,88,150,.8);border-radius:0 0 4px 0"></div>
<div class="t" style="left:1171.5px;top:199px;font-size:9.8px;color:#8fa6ba;font-weight:700">w000761</div>
<svg style="left:1216px;top:197px" width="46" height="13" viewBox="0 0 46 13" fill="none"><path d="M10.500 2.500v4H1.500M4.500 3.500l-3 3 3 3" stroke="#6f8ba3" stroke-width="1.100"/><path d="M17.500 2v9M27.500 2v9M19 6.500h7M20.800 4.500l-2 2 2 2M25.200 4.500l2 2-2 2" stroke="#1c7050" stroke-width="1.200"/><g stroke="#1c7050" stroke-width="1.200"><circle cx="37.500" cy="2.800" r="1.300"/><path d="M37.500 4.200v7.300M34.800 6h5.400M32.800 7.500c0 2.500 2 4 4.700 4s4.700-1.500 4.700-4"/></g></svg>
<div class="a" style="left:1557px;top:197.300px;width:30px;height:12.400px;background:#8d9ba3;border-radius:0 0 0 4px"></div>
<div class="t" style="left:1567.5px;top:198px;font-size:10.5px;color:#0c171d;-webkit-text-stroke:.2px #0c171d">3</div>
<svg style="left:1572.9px;top:197.0px;fill:#0c171d;" width="13" height="13" viewBox="0 0 24 24"><use href="#i-up"/></svg>
<!--CENTER-END-->

<!-- ================= RIGHT ATTRIBUTES ================= -->
<div class="hdr" style="left:1624px;top:110px;width:287px;height:33.800px"></div>
<svg style="left:1631.8px;top:113.8px;fill:#fff;" width="24.5" height="24.5" viewBox="0 0 24 24"><use href="#i-listalt"/></svg>
<div class="t" style="left:1660.3px;top:119px;font-size:16.7px;">Attribute</div>
<svg style="left:1808.3px;top:118.2px;fill:#fff;" width="23" height="23" viewBox="0 0 24 24"><use href="#i-unmore"/></svg>
<svg style="left:1845.5px;top:118.2px;fill:#fff;" width="23" height="23" viewBox="0 0 24 24"><use href="#i-unless"/></svg>
<svg style="left:1881.9px;top:115.4px;fill:#fff;" width="24" height="24" viewBox="0 0 24 24"><use href="#i-close"/></svg>
<div class="t m" style="left:1679.8px;top:163px;font-size:13.3px;">SEITE</div>
<div class="t m" style="left:1750.6px;top:163px;font-size:13.2px;color:#4ea3f3">WIDGET</div>
<div class="t m" style="left:1836.0px;top:163px;font-size:13px;">CSS</div>
<svg style="left:1880.7px;top:159.7px;fill:#d0d0d0;" width="20" height="20" viewBox="0 0 24 24"><use href="#i-cr"/></svg>
<div class="a" style="left:1734px;top:188.700px;width:86px;height:2.200px;background:#4ea3f3"></div>
<div class="a" style="left:1624px;top:203px;width:40px;height:15.800px;background:#2a2a2a"></div>
<div class="a" style="left:1625.500px;top:205.500px;width:6px;height:1px;background:#aaa"></div>
<div class="a" style="left:1630.5px;top:209px;width:1.500px;height:2px;background:#888"></div>
<div class="a" style="left:1627.5px;top:214px;width:8px;height:1px;background:#888;opacity:.7"></div>
<div class="a" style="left:1643.0px;top:209px;width:1.500px;height:2px;background:#3f8ee0"></div>
<div class="a" style="left:1640.0px;top:214px;width:8px;height:1px;background:#3f8ee0;opacity:.7"></div>
<div class="a" style="left:1655.5px;top:209px;width:1.500px;height:2px;background:#888"></div>
<div class="a" style="left:1652.5px;top:214px;width:8px;height:1px;background:#888;opacity:.7"></div>
<div class="t" style="left:1668.2px;top:195px;font-size:15.2px;">w000761</div>
<div class="a" style="left:1738.700px;top:191.100px;width:144.400px;height:19.800px;background:#fff;border-radius:3px"></div>
<div class="t" style="left:1742.7px;top:195px;font-size:12.25px;color:#1a8cff;font-weight:700;font-style:italic">Vis 2 - Material-Widgets</div>
<div class="t" style="left:1739.5px;top:217px;font-size:11.4px;font-style:italic">Schalter oder Knöpfe</div>
<div class="a" style="left:1906.200px;top:230.700px;width:4.600px;height:850px;background:#c8c8c8"></div>
<div class="a" style="left:1906.200px;top:230.700px;width:4.600px;height:201.500px;background:#5c5c5c"></div>
<div class="sec" style="top:241px;height:28px"></div>
<svg style="left:1626.2px;top:245.4px;fill:#fff;" width="19.5" height="19.5" viewBox="0 0 24 24"><use href="#i-filter"/></svg>
<div class="t" style="left:1646.1px;top:249px;font-size:13.2px;-webkit-text-stroke:.2px #fff">Generell</div>
<svg style="left:1863.9px;top:246.0px;fill:#fff;" width="16" height="16" viewBox="0 0 24 24"><use href="#i-cbo"/></svg>
<div class="sec" style="top:279px;height:28px"></div>
<div class="t" style="left:1626.4px;top:286px;font-size:13.2px;-webkit-text-stroke:.2px #fff">Sichtbarkeit</div>
<svg style="left:1863.9px;top:283.8px;fill:#fff;" width="16" height="16" viewBox="0 0 24 24"><use href="#i-cbo"/></svg>
<div class="sec" style="top:317px;height:216px"></div>
<div class="t" style="left:1626.4px;top:340px;font-size:13.1px;font-weight:700">Allgemein</div>
<div class="a" style="left:1866.2px;top:340.3px;width:11.4px;height:11.4px;background:#1d2b38"></div><svg style="left:1863.9px;top:338.0px;fill:#4ea9f5;" width="16" height="16" viewBox="0 0 24 24"><use href="#i-cb"/></svg>
<svg style="left:1880.0px;top:334.5px;fill:#fff;" width="24" height="24" viewBox="0 0 24 24"><use href="#i-less"/></svg>
<div class="t" style="left:1626.8px;top:384px;font-size:12.6px;">Ohne Rahmen</div>
<div class="a" style="left:1823.3px;top:381.3px;width:11.4px;height:11.4px;background:#1d2b38"></div><svg style="left:1821.0px;top:379.0px;fill:#4ea9f5;" width="16" height="16" viewBox="0 0 24 24"><use href="#i-cb"/></svg>
<div class="t" style="left:1626.8px;top:413px;font-size:12.6px;">Anzahl der Elemente</div>
<svg style="left:1801.8px;top:407.4px;fill:#fff;" width="15" height="15" viewBox="0 0 24 24"><use href="#i-link"/></svg>
<div class="t" style="left:1821.3px;top:412px;font-size:12.6px;">4</div>
<div class="a" style="left:1821.0px;top:429.8px;width:82.0px;height:1px;background:#c4c4c4"></div>
<div class="t" style="left:1626.8px;top:443px;font-size:12.6px;">Typ</div>
<svg style="left:1801.3px;top:437.9px;fill:#fff;" width="15" height="15" viewBox="0 0 24 24"><use href="#i-link"/></svg>
<div class="t" style="left:1821.3px;top:442px;font-size:12.6px;">Reihen</div>
<svg style="left:1879.1px;top:436.3px;fill:#fff;" width="24" height="24" viewBox="0 0 24 24"><use href="#i-dd"/></svg>
<div class="a" style="left:1821.0px;top:457.7px;width:82.0px;height:1px;background:#c4c4c4"></div>
<div class="t" style="left:1626.8px;top:469px;font-size:12.3px;">Schalter anzeigen - ALLE</div>
<svg style="left:1821.0px;top:463.2px;fill:#fff;" width="16" height="16" viewBox="0 0 24 24"><use href="#i-cbo"/></svg>
<div class="t" style="left:1626.8px;top:494px;font-size:12.6px;">Keine anderen Widgets</div>
<div class="t" style="left:1626.8px;top:515px;font-size:12.6px;">einbinden</div>
<svg style="left:1821.0px;top:499.3px;fill:#fff;" width="16" height="16" viewBox="0 0 24 24"><use href="#i-cbo"/></svg>
<div class="sec" style="top:543px;height:540px"></div>
<div class="t" style="left:1626.8px;top:566px;font-size:13.25px;font-weight:700">Schalter oder Knopf</div>
<div class="t" style="left:1626.8px;top:581px;font-size:13.25px;font-weight:700">[1]</div>
<svg style="left:1769.5px;top:567.7px;fill:#fff;" width="24" height="24" viewBox="0 0 24 24"><use href="#i-ccopy"/></svg>
<svg style="left:1793.0px;top:567.6px;fill:#fff;" width="24" height="24" viewBox="0 0 24 24"><use href="#i-del"/></svg>
<svg style="left:1840.7px;top:568.3px;fill:#fff;" width="23" height="23" viewBox="0 0 24 24"><use href="#i-down"/></svg>
<div class="a" style="left:1866.2px;top:574.5px;width:11.4px;height:11.4px;background:#1d2b38"></div><svg style="left:1863.9px;top:572.2px;fill:#4ea9f5;" width="16" height="16" viewBox="0 0 24 24"><use href="#i-cb"/></svg>
<svg style="left:1880.0px;top:568.0px;fill:#fff;" width="24" height="24" viewBox="0 0 24 24"><use href="#i-less"/></svg>
<div class="t" style="left:1627.3px;top:628px;font-size:13.1px;">Objekt Identifikation</div>
<div class="a" style="left:1761.100px;top:628px;width:111.500px;height:18px;overflow:hidden"><div class="t" style="left:0.0px;top:2px;font-size:12.6px;">0_userdata.0.ON_OFF</div></div>
<div class="a" style="left:1882.9px;top:637.0px;width:1.800px;height:1.800px;background:#4ea0f0"></div><div class="a" style="left:1886.6px;top:637.0px;width:1.800px;height:1.800px;background:#4ea0f0"></div><div class="a" style="left:1890.3px;top:637.0px;width:1.800px;height:1.800px;background:#4ea0f0"></div>
<div class="a" style="left:1761.1px;top:649.9px;width:141.9px;height:1px;background:#c4c4c4"></div>
<svg style="left:1741.4px;top:644.7px;fill:#fff;" width="15" height="15" viewBox="0 0 24 24"><use href="#i-link"/></svg>
<div class="t" style="left:1761.1px;top:655px;font-size:11.4px;font-style:italic">ON_OFF</div>
<div class="t" style="left:1627.3px;top:680px;font-size:12.6px;">Typ</div>
<svg style="left:1741.4px;top:674.7px;fill:#fff;" width="15" height="15" viewBox="0 0 24 24"><use href="#i-link"/></svg>
<div class="t" style="left:1761.1px;top:679px;font-size:12.6px;">Info</div>
<svg style="left:1878.7px;top:673.6px;fill:#fff;" width="24" height="24" viewBox="0 0 24 24"><use href="#i-dd"/></svg>
<div class="a" style="left:1761.1px;top:694.6px;width:141.9px;height:1px;background:#c4c4c4"></div>
<div class="t" style="left:1627.3px;top:705px;font-size:12.6px;">Ohne Symbol</div>
<svg style="left:1760.9px;top:700.2px;fill:#fff;" width="16" height="16" viewBox="0 0 24 24"><use href="#i-cbo"/></svg>
<div class="t" style="left:1627.3px;top:731px;font-size:12.6px;">Symbol</div>
<svg style="left:1711.4px;top:726.5px;fill:#fff;" width="15" height="15" viewBox="0 0 24 24"><use href="#i-link"/></svg>
<svg style="left:1727.300px;top:726px" width="29.400" height="29.600" viewBox="0 0 40 39.200"><rect width="40" height="39.200" fill="url(#rg)"/><path d="M15.750 3.800c-4.800 7.600-9.650 14.500-9.650 20.900a9.650 9.650 0 0 0 19.300 0c0-6.400-4.850-13.300-9.650-20.900z" fill="none" stroke="#1fb32a" stroke-width="1.500"/><path d="M10 25c0 3 2 5.500 5 6.200" fill="none" stroke="#1fb32a" stroke-width="1.300"/><path d="M28.900 4c-2.500 3.900-5 7.300-5 10.900a5 5 0 0 0 10 0c0-3.600-2.500-7-5-10.900z" fill="none" stroke="#1fb32a" stroke-width="1.400"/></svg>
<div class="a" style="left:1761.100px;top:733px;width:112.500px;height:18px;overflow:hidden"><div class="t" style="left:0.0px;top:2px;font-size:12.4px;">_PRJ_NAME/Entfeuchter</div></div>
<div class="a" style="left:1882.9px;top:742.2px;width:1.800px;height:1.800px;background:#4ea0f0"></div><div class="a" style="left:1886.6px;top:742.2px;width:1.800px;height:1.800px;background:#4ea0f0"></div><div class="a" style="left:1890.3px;top:742.2px;width:1.800px;height:1.800px;background:#4ea0f0"></div>
<div class="a" style="left:1761.1px;top:755.1px;width:141.9px;height:1px;background:#c4c4c4"></div>
<div class="t" style="left:1627.3px;top:771px;font-size:12.6px;">Aktives Symbol</div>
<svg style="left:1741.4px;top:765.8px;fill:#fff;" width="15" height="15" viewBox="0 0 24 24"><use href="#i-link"/></svg>
<div class="a" style="left:1882.9px;top:777.4px;width:1.800px;height:1.800px;background:#4ea0f0"></div><div class="a" style="left:1886.6px;top:777.4px;width:1.800px;height:1.800px;background:#4ea0f0"></div><div class="a" style="left:1890.3px;top:777.4px;width:1.800px;height:1.800px;background:#4ea0f0"></div>
<div class="a" style="left:1761.1px;top:789.9px;width:141.9px;height:1px;background:#c4c4c4"></div>
<div class="t" style="left:1627.3px;top:801px;font-size:12.4px;">Kleines aktives Symbol</div>
<svg style="left:1741.4px;top:816.5px;fill:#fff;" width="15" height="15" viewBox="0 0 24 24"><use href="#i-link"/></svg>
<div class="a" style="left:1865.6px;top:817.4px;width:1.800px;height:1.800px;background:#4ea0f0"></div><div class="a" style="left:1869.3px;top:817.4px;width:1.800px;height:1.800px;background:#4ea0f0"></div><div class="a" style="left:1873.0px;top:817.4px;width:1.800px;height:1.800px;background:#4ea0f0"></div>
<div class="a" style="left:1761.1px;top:826.8px;width:77.9px;height:1px;background:#c4c4c4"></div>
<div class="t" style="left:1627.3px;top:850px;font-size:12.6px;">Farbe</div>
<svg style="left:1741.4px;top:844.3px;fill:#fff;" width="15" height="15" viewBox="0 0 24 24"><use href="#i-link"/></svg>
<div class="a" style="left:1761.1px;top:866.6px;width:85.6px;height:1px;background:#c4c4c4"></div>
<div class="a" style="left:1855.100px;top:841.1px;width:47.800px;height:25.6px;border:1px dashed #c4c4c4"></div>
<div class="t" style="left:1627.3px;top:881px;font-size:12.6px;">Aktive Farbe</div>
<svg style="left:1741.4px;top:875.4px;fill:#fff;" width="15" height="15" viewBox="0 0 24 24"><use href="#i-link"/></svg>
<div class="a" style="left:1761.1px;top:898.8px;width:85.6px;height:1px;background:#c4c4c4"></div>
<div class="a" style="left:1855.100px;top:872.2px;width:47.800px;height:25.6px;border:1px dashed #c4c4c4"></div>
<div class="t" style="left:1627.3px;top:913px;font-size:12.6px;">Titel</div>
<svg style="left:1741.4px;top:907.6px;fill:#fff;" width="15" height="15" viewBox="0 0 24 24"><use href="#i-link"/></svg>
<div class="t" style="left:1761.1px;top:911px;font-size:12.6px;">TEST</div>
<div class="a" style="left:1761.1px;top:929.9px;width:141.9px;height:1px;background:#c4c4c4"></div>
<div class="t" style="left:1627.3px;top:944px;font-size:12.6px;">Einheit</div>
<svg style="left:1741.4px;top:938.5px;fill:#fff;" width="15" height="15" viewBox="0 0 24 24"><use href="#i-link"/></svg>
<div class="a" style="left:1761.1px;top:960.8px;width:141.9px;height:1px;background:#c4c4c4"></div>
<div class="t" style="left:1627.3px;top:972px;font-size:12.6px;">Diagramm ausblenden</div>
<div class="a" style="left:1763.2px;top:968.3px;width:11.4px;height:11.4px;background:#1d2b38"></div><svg style="left:1760.9px;top:966.0px;fill:#4ea9f5;" width="16" height="16" viewBox="0 0 24 24"><use href="#i-cb"/></svg>
<div class="t" style="left:1627.3px;top:1000px;font-size:12.9px;">Inaktiver Infotext</div>
<svg style="left:1741.4px;top:994.3px;fill:#fff;" width="15" height="15" viewBox="0 0 24 24"><use href="#i-link"/></svg>
<div class="t" style="left:1761.1px;top:999px;font-size:12.6px;">ON</div>
<div class="a" style="left:1761.1px;top:1017.7px;width:141.9px;height:1px;background:#c4c4c4"></div>
<div class="t" style="left:1627.3px;top:1032px;font-size:12.9px;">Aktiver Infotext</div>
<svg style="left:1741.4px;top:1026.5px;fill:#fff;" width="15" height="15" viewBox="0 0 24 24"><use href="#i-link"/></svg>
<div class="t" style="left:1761.1px;top:1031px;font-size:12.6px;">OFF</div>
<div class="a" style="left:1761.1px;top:1048.8px;width:141.9px;height:1px;background:#c4c4c4"></div>
<div class="t" style="left:1627.3px;top:1063px;font-size:12.9px;">Inaktive Infofarbe</div>
<svg style="left:1741.4px;top:1057.6px;fill:#fff;" width="15" height="15" viewBox="0 0 24 24"><use href="#i-link"/></svg>
<div class="a" style="left:1855.100px;top:1054.4px;width:47.800px;height:30.6px;border:1px dashed #c4c4c4"></div>
<svg style="left:1616px;top:380px" width="304" height="700" viewBox="1616 380 304 700" fill="none" stroke="#e5142c" stroke-linecap="round"><path d="M1624 430.600c30-2.500 92-1 126-3.600" stroke-width="4"/><path d="M1838 396.500c-14-5-36-2.500-38.500 11-2 12 13 19.500 29 19.500 17 0 27.500-8 26.500-19-1-10-9-13.500-22-13.500-3 0-6 .5-9 1.500" stroke-width="3.200"/><path d="M1628.500 695.200h21" stroke-width="3.600"/><path d="M1758.500 693.800h34" stroke-width="3.600"/><path d="M1628.500 750.200c15 .3 30-.8 45.500-.6" stroke-width="3.600"/><path d="M1761 984.600c3.500.5 7.500-.2 11-1" stroke-width="3.400"/><path d="M1632 1016.500c27 2.500 55 1.500 82 .8" stroke-width="4"/><path d="M1633 1048.700c30 1 58 8 89 5.800" stroke-width="3.800"/></svg>
<!--RIGHT-END-->

</body>
</html>
